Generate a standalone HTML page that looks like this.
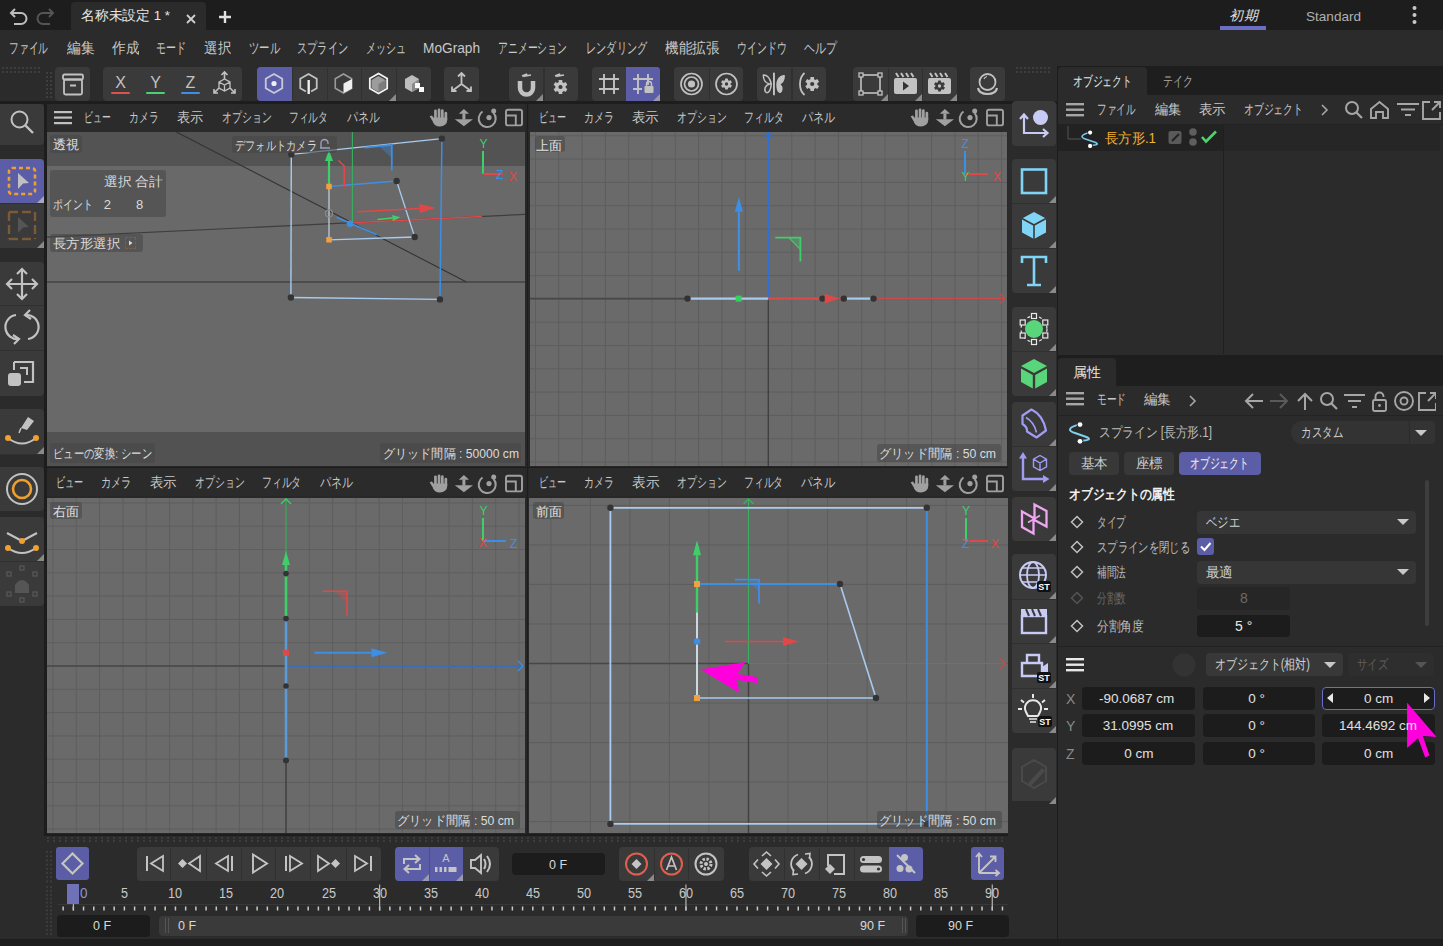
<!DOCTYPE html><html><head><meta charset="utf-8"><style>
html,body{margin:0;padding:0;width:1443px;height:946px;overflow:hidden;background:#1d1d1d;font-family:"Liberation Sans",sans-serif;}
div,span,svg{position:absolute;}
span{white-space:nowrap;line-height:1;}
</style></head><body>
<div style="left:0px;top:0px;width:1443px;height:30px;background:#1d1d1d;border-radius:0px;"></div><div style="left:71px;top:2px;width:135px;height:28px;background:#2b2b2b;border-radius:0px;border-radius:4px 4px 0 0;"></div><div style="left:0px;top:30px;width:1443px;height:72px;background:#2b2b2b;border-radius:0px;"></div><div style="left:1220px;top:26px;width:46px;height:4px;background:#6a6fc4;border-radius:0px;"></div><div style="left:55px;top:67px;width:35px;height:34px;background:#3a3a3a;border-radius:4px;"></div><div style="left:103px;top:67px;width:139px;height:34px;background:#3a3a3a;border-radius:4px;"></div><div style="left:257px;top:67px;width:174px;height:34px;background:#3a3a3a;border-radius:4px;"></div><div style="left:291.8px;top:68px;width:1px;height:32px;background:#303030;border-radius:0px;"></div><div style="left:326.6px;top:68px;width:1px;height:32px;background:#303030;border-radius:0px;"></div><div style="left:361.4px;top:68px;width:1px;height:32px;background:#303030;border-radius:0px;"></div><div style="left:396.2px;top:68px;width:1px;height:32px;background:#303030;border-radius:0px;"></div><div style="left:257.0px;top:67px;width:34.8px;height:34px;background:#5b5ea6;border-radius:0px;border-radius:4px 0 0 4px;"></div><div style="left:444px;top:67px;width:35px;height:34px;background:#3a3a3a;border-radius:4px;"></div><div style="left:509px;top:67px;width:69px;height:34px;background:#3a3a3a;border-radius:4px;"></div><div style="left:543.5px;top:68px;width:1px;height:32px;background:#303030;border-radius:0px;"></div><div style="left:592px;top:67px;width:68px;height:34px;background:#3a3a3a;border-radius:4px;"></div><div style="left:626.0px;top:68px;width:1px;height:32px;background:#303030;border-radius:0px;"></div><div style="left:626.0px;top:67px;width:34.0px;height:34px;background:#5b5ea6;border-radius:0px;border-radius:0 4px 4px 0;"></div><div style="left:674px;top:67px;width:69px;height:34px;background:#3a3a3a;border-radius:4px;"></div><div style="left:708.5px;top:68px;width:1px;height:32px;background:#303030;border-radius:0px;"></div><div style="left:757px;top:67px;width:69px;height:34px;background:#3a3a3a;border-radius:4px;"></div><div style="left:791.5px;top:68px;width:1px;height:32px;background:#303030;border-radius:0px;"></div><div style="left:853px;top:67px;width:104px;height:34px;background:#3a3a3a;border-radius:4px;"></div><div style="left:887.6666666666666px;top:68px;width:1px;height:32px;background:#303030;border-radius:0px;"></div><div style="left:922.3333333333334px;top:68px;width:1px;height:32px;background:#303030;border-radius:0px;"></div><div style="left:970px;top:67px;width:35px;height:34px;background:#3a3a3a;border-radius:4px;"></div><div style="left:0px;top:101px;width:1058px;height:3px;background:#1d1d1d;border-radius:0px;"></div><div style="left:0px;top:104px;width:46px;height:735px;background:#2b2b2b;border-radius:0px;"></div><div style="left:44px;top:104px;width:3px;height:735px;background:#1d1d1d;border-radius:0px;"></div><div style="left:0px;top:104px;width:44px;height:41px;background:#3a3a3a;border-radius:0px;border-radius:0 4px 4px 0;"></div><div style="left:0px;top:159px;width:44px;height:89px;background:#3a3a3a;border-radius:0px;border-radius:0 4px 4px 0;"></div><div style="left:0px;top:262px;width:44px;height:134px;background:#3a3a3a;border-radius:0px;border-radius:0 4px 4px 0;"></div><div style="left:0px;top:409px;width:44px;height:45px;background:#3a3a3a;border-radius:0px;border-radius:0 4px 4px 0;"></div><div style="left:0px;top:467px;width:44px;height:44px;background:#3a3a3a;border-radius:0px;border-radius:0 4px 4px 0;"></div><div style="left:0px;top:517px;width:44px;height:89px;background:#3a3a3a;border-radius:0px;border-radius:0 4px 4px 0;"></div><div style="left:0px;top:159px;width:44px;height:44px;background:#5b5ea6;border-radius:0px;border-radius:0 4px 0 0;"></div><div style="left:47px;top:104px;width:961px;height:730px;background:#282828;border-radius:0px;"></div><div style="left:526.8px;top:104px;width:1.6px;height:730px;background:#1d1d1d;border-radius:0px;"></div><div style="left:47px;top:466.8px;width:961px;height:1.5px;background:#1d1d1d;border-radius:0px;"></div><div style="left:47px;top:104px;width:478px;height:28px;background:#2b2b2b;border-radius:0px;"></div><div style="left:529px;top:104px;width:479px;height:28px;background:#2b2b2b;border-radius:0px;"></div><div style="left:47px;top:468px;width:478px;height:28px;background:#2b2b2b;border-radius:0px;"></div><div style="left:529px;top:468px;width:479px;height:28px;background:#2b2b2b;border-radius:0px;"></div><div style="left:47px;top:132px;width:478px;height:334px;background:#696969;border-radius:0px;"></div><div style="left:47px;top:132px;width:478px;height:34px;background:#535353;border-radius:0px;"></div><div style="left:47px;top:432px;width:478px;height:34px;background:#525252;border-radius:0px;"></div><svg style="left:530px;top:132px;" width="477" height="334" viewBox="0 0 477 334"><rect width="477" height="334" fill="#6a6a6a"/><rect x="5.00" y="0" width="1" height="334" fill="#5e5e5e"/><rect x="28.30" y="0" width="1" height="334" fill="#5e5e5e"/><rect x="51.60" y="0" width="1" height="334" fill="#5e5e5e"/><rect x="74.90" y="0" width="1" height="334" fill="#5e5e5e"/><rect x="98.20" y="0" width="1" height="334" fill="#5e5e5e"/><rect x="121.50" y="0" width="1" height="334" fill="#5e5e5e"/><rect x="144.80" y="0" width="1" height="334" fill="#5e5e5e"/><rect x="168.10" y="0" width="1" height="334" fill="#5e5e5e"/><rect x="191.40" y="0" width="1" height="334" fill="#5e5e5e"/><rect x="214.70" y="0" width="1" height="334" fill="#5e5e5e"/><rect x="238.00" y="0" width="1" height="334" fill="#5e5e5e"/><rect x="261.30" y="0" width="1" height="334" fill="#5e5e5e"/><rect x="284.60" y="0" width="1" height="334" fill="#5e5e5e"/><rect x="307.90" y="0" width="1" height="334" fill="#5e5e5e"/><rect x="331.20" y="0" width="1" height="334" fill="#5e5e5e"/><rect x="354.50" y="0" width="1" height="334" fill="#5e5e5e"/><rect x="377.80" y="0" width="1" height="334" fill="#5e5e5e"/><rect x="401.10" y="0" width="1" height="334" fill="#5e5e5e"/><rect x="424.40" y="0" width="1" height="334" fill="#5e5e5e"/><rect x="447.70" y="0" width="1" height="334" fill="#5e5e5e"/><rect x="471.00" y="0" width="1" height="334" fill="#5e5e5e"/><rect x="0" y="3.30" width="477" height="1" fill="#5e5e5e"/><rect x="0" y="26.60" width="477" height="1" fill="#5e5e5e"/><rect x="0" y="49.90" width="477" height="1" fill="#5e5e5e"/><rect x="0" y="73.20" width="477" height="1" fill="#5e5e5e"/><rect x="0" y="96.50" width="477" height="1" fill="#5e5e5e"/><rect x="0" y="119.80" width="477" height="1" fill="#5e5e5e"/><rect x="0" y="143.10" width="477" height="1" fill="#5e5e5e"/><rect x="0" y="166.40" width="477" height="1" fill="#5e5e5e"/><rect x="0" y="189.70" width="477" height="1" fill="#5e5e5e"/><rect x="0" y="213.00" width="477" height="1" fill="#5e5e5e"/><rect x="0" y="236.30" width="477" height="1" fill="#5e5e5e"/><rect x="0" y="259.60" width="477" height="1" fill="#5e5e5e"/><rect x="0" y="282.90" width="477" height="1" fill="#5e5e5e"/><rect x="0" y="306.20" width="477" height="1" fill="#5e5e5e"/><rect x="0" y="329.50" width="477" height="1" fill="#5e5e5e"/></svg><svg style="left:47px;top:498px;" width="478" height="335" viewBox="0 0 478 335"><rect width="478" height="335" fill="#6a6a6a"/><rect x="5.50" y="0" width="1" height="335" fill="#5e5e5e"/><rect x="28.80" y="0" width="1" height="335" fill="#5e5e5e"/><rect x="52.10" y="0" width="1" height="335" fill="#5e5e5e"/><rect x="75.40" y="0" width="1" height="335" fill="#5e5e5e"/><rect x="98.70" y="0" width="1" height="335" fill="#5e5e5e"/><rect x="122.00" y="0" width="1" height="335" fill="#5e5e5e"/><rect x="145.30" y="0" width="1" height="335" fill="#5e5e5e"/><rect x="168.60" y="0" width="1" height="335" fill="#5e5e5e"/><rect x="191.90" y="0" width="1" height="335" fill="#5e5e5e"/><rect x="215.20" y="0" width="1" height="335" fill="#5e5e5e"/><rect x="238.50" y="0" width="1" height="335" fill="#5e5e5e"/><rect x="261.80" y="0" width="1" height="335" fill="#5e5e5e"/><rect x="285.10" y="0" width="1" height="335" fill="#5e5e5e"/><rect x="308.40" y="0" width="1" height="335" fill="#5e5e5e"/><rect x="331.70" y="0" width="1" height="335" fill="#5e5e5e"/><rect x="355.00" y="0" width="1" height="335" fill="#5e5e5e"/><rect x="378.30" y="0" width="1" height="335" fill="#5e5e5e"/><rect x="401.60" y="0" width="1" height="335" fill="#5e5e5e"/><rect x="424.90" y="0" width="1" height="335" fill="#5e5e5e"/><rect x="448.20" y="0" width="1" height="335" fill="#5e5e5e"/><rect x="471.50" y="0" width="1" height="335" fill="#5e5e5e"/><rect x="0" y="4.40" width="478" height="1" fill="#5e5e5e"/><rect x="0" y="27.70" width="478" height="1" fill="#5e5e5e"/><rect x="0" y="51.00" width="478" height="1" fill="#5e5e5e"/><rect x="0" y="74.30" width="478" height="1" fill="#5e5e5e"/><rect x="0" y="97.60" width="478" height="1" fill="#5e5e5e"/><rect x="0" y="120.90" width="478" height="1" fill="#5e5e5e"/><rect x="0" y="144.20" width="478" height="1" fill="#5e5e5e"/><rect x="0" y="167.50" width="478" height="1" fill="#5e5e5e"/><rect x="0" y="190.80" width="478" height="1" fill="#5e5e5e"/><rect x="0" y="214.10" width="478" height="1" fill="#5e5e5e"/><rect x="0" y="237.40" width="478" height="1" fill="#5e5e5e"/><rect x="0" y="260.70" width="478" height="1" fill="#5e5e5e"/><rect x="0" y="284.00" width="478" height="1" fill="#5e5e5e"/><rect x="0" y="307.30" width="478" height="1" fill="#5e5e5e"/><rect x="0" y="330.60" width="478" height="1" fill="#5e5e5e"/></svg><svg style="left:529px;top:498px;" width="479" height="335" viewBox="0 0 479 335"><rect width="479" height="335" fill="#6a6a6a"/><rect x="21.35" y="0" width="1" height="335" fill="#5e5e5e"/><rect x="60.88" y="0" width="1" height="335" fill="#5e5e5e"/><rect x="100.41" y="0" width="1" height="335" fill="#5e5e5e"/><rect x="139.94" y="0" width="1" height="335" fill="#5e5e5e"/><rect x="179.47" y="0" width="1" height="335" fill="#5e5e5e"/><rect x="219.00" y="0" width="1" height="335" fill="#5e5e5e"/><rect x="258.53" y="0" width="1" height="335" fill="#5e5e5e"/><rect x="298.06" y="0" width="1" height="335" fill="#5e5e5e"/><rect x="337.59" y="0" width="1" height="335" fill="#5e5e5e"/><rect x="377.12" y="0" width="1" height="335" fill="#5e5e5e"/><rect x="416.65" y="0" width="1" height="335" fill="#5e5e5e"/><rect x="456.18" y="0" width="1" height="335" fill="#5e5e5e"/><rect x="0" y="6.88" width="479" height="1" fill="#5e5e5e"/><rect x="0" y="46.41" width="479" height="1" fill="#5e5e5e"/><rect x="0" y="85.94" width="479" height="1" fill="#5e5e5e"/><rect x="0" y="125.47" width="479" height="1" fill="#5e5e5e"/><rect x="0" y="165.00" width="479" height="1" fill="#5e5e5e"/><rect x="0" y="204.53" width="479" height="1" fill="#5e5e5e"/><rect x="0" y="244.06" width="479" height="1" fill="#5e5e5e"/><rect x="0" y="283.59" width="479" height="1" fill="#5e5e5e"/><rect x="0" y="323.12" width="479" height="1" fill="#5e5e5e"/></svg><div style="left:1008px;top:104px;width:50px;height:735px;background:#2b2b2b;border-radius:0px;"></div><div style="left:1012px;top:101px;width:44px;height:45px;background:#3a3a3a;border-radius:4px;"></div><div style="left:1012px;top:159px;width:44px;height:134px;background:#3a3a3a;border-radius:4px;"></div><div style="left:1012px;top:307px;width:44px;height:89px;background:#3a3a3a;border-radius:4px;"></div><div style="left:1012px;top:402px;width:44px;height:89px;background:#3a3a3a;border-radius:4px;"></div><div style="left:1012px;top:497px;width:44px;height:44px;background:#3a3a3a;border-radius:4px;"></div><div style="left:1012px;top:554px;width:44px;height:179px;background:#3a3a3a;border-radius:4px;"></div><div style="left:1012px;top:748px;width:44px;height:56px;background:#3a3a3a;border-radius:4px;"></div><div style="left:1057px;top:66px;width:386px;height:873px;background:#1d1d1d;border-radius:0px;"></div><div style="left:1058px;top:67px;width:385px;height:28px;background:#1e1e1e;border-radius:0px;"></div><div style="left:1058px;top:67px;width:89px;height:28px;background:#2b2b2b;border-radius:0px;border-radius:4px 4px 0 0;"></div><div style="left:1058px;top:95px;width:385px;height:260px;background:#2b2b2b;border-radius:0px;"></div><div style="left:1058px;top:124px;width:385px;height:1px;background:#232323;border-radius:0px;"></div><div style="left:1058px;top:125px;width:166px;height:26px;background:#222222;border-radius:0px;"></div><div style="left:1224px;top:125px;width:216px;height:26px;background:#262626;border-radius:0px;"></div><div style="left:1223px;top:125px;width:1px;height:229px;background:#1f1f1f;border-radius:0px;"></div><div style="left:1058px;top:358px;width:385px;height:28px;background:#1e1e1e;border-radius:0px;"></div><div style="left:1058px;top:358px;width:58px;height:28px;background:#2b2b2b;border-radius:0px;border-radius:4px 4px 0 0;"></div><div style="left:1058px;top:386px;width:385px;height:553px;background:#2b2b2b;border-radius:0px;"></div><div style="left:0px;top:836px;width:1008px;height:103px;background:#2b2b2b;border-radius:0px;"></div><div style="left:1008px;top:801px;width:49px;height:138px;background:#2b2b2b;border-radius:0px;"></div><svg style="left:47px;top:837px;" width="961" height="6" viewBox="0 0 961 6"><rect x="0" y="0" width="2" height="2" fill="#3c3c3c"/><rect x="0" y="3" width="2" height="2" fill="#3c3c3c"/><rect x="6" y="0" width="2" height="2" fill="#3c3c3c"/><rect x="6" y="3" width="2" height="2" fill="#3c3c3c"/><rect x="12" y="0" width="2" height="2" fill="#3c3c3c"/><rect x="12" y="3" width="2" height="2" fill="#3c3c3c"/><rect x="18" y="0" width="2" height="2" fill="#3c3c3c"/><rect x="18" y="3" width="2" height="2" fill="#3c3c3c"/><rect x="24" y="0" width="2" height="2" fill="#3c3c3c"/><rect x="24" y="3" width="2" height="2" fill="#3c3c3c"/><rect x="30" y="0" width="2" height="2" fill="#3c3c3c"/><rect x="30" y="3" width="2" height="2" fill="#3c3c3c"/><rect x="36" y="0" width="2" height="2" fill="#3c3c3c"/><rect x="36" y="3" width="2" height="2" fill="#3c3c3c"/><rect x="42" y="0" width="2" height="2" fill="#3c3c3c"/><rect x="42" y="3" width="2" height="2" fill="#3c3c3c"/><rect x="48" y="0" width="2" height="2" fill="#3c3c3c"/><rect x="48" y="3" width="2" height="2" fill="#3c3c3c"/><rect x="54" y="0" width="2" height="2" fill="#3c3c3c"/><rect x="54" y="3" width="2" height="2" fill="#3c3c3c"/><rect x="60" y="0" width="2" height="2" fill="#3c3c3c"/><rect x="60" y="3" width="2" height="2" fill="#3c3c3c"/><rect x="66" y="0" width="2" height="2" fill="#3c3c3c"/><rect x="66" y="3" width="2" height="2" fill="#3c3c3c"/><rect x="72" y="0" width="2" height="2" fill="#3c3c3c"/><rect x="72" y="3" width="2" height="2" fill="#3c3c3c"/><rect x="78" y="0" width="2" height="2" fill="#3c3c3c"/><rect x="78" y="3" width="2" height="2" fill="#3c3c3c"/><rect x="84" y="0" width="2" height="2" fill="#3c3c3c"/><rect x="84" y="3" width="2" height="2" fill="#3c3c3c"/><rect x="90" y="0" width="2" height="2" fill="#3c3c3c"/><rect x="90" y="3" width="2" height="2" fill="#3c3c3c"/><rect x="96" y="0" width="2" height="2" fill="#3c3c3c"/><rect x="96" y="3" width="2" height="2" fill="#3c3c3c"/><rect x="102" y="0" width="2" height="2" fill="#3c3c3c"/><rect x="102" y="3" width="2" height="2" fill="#3c3c3c"/><rect x="108" y="0" width="2" height="2" fill="#3c3c3c"/><rect x="108" y="3" width="2" height="2" fill="#3c3c3c"/><rect x="114" y="0" width="2" height="2" fill="#3c3c3c"/><rect x="114" y="3" width="2" height="2" fill="#3c3c3c"/><rect x="120" y="0" width="2" height="2" fill="#3c3c3c"/><rect x="120" y="3" width="2" height="2" fill="#3c3c3c"/><rect x="126" y="0" width="2" height="2" fill="#3c3c3c"/><rect x="126" y="3" width="2" height="2" fill="#3c3c3c"/><rect x="132" y="0" width="2" height="2" fill="#3c3c3c"/><rect x="132" y="3" width="2" height="2" fill="#3c3c3c"/><rect x="138" y="0" width="2" height="2" fill="#3c3c3c"/><rect x="138" y="3" width="2" height="2" fill="#3c3c3c"/><rect x="144" y="0" width="2" height="2" fill="#3c3c3c"/><rect x="144" y="3" width="2" height="2" fill="#3c3c3c"/><rect x="150" y="0" width="2" height="2" fill="#3c3c3c"/><rect x="150" y="3" width="2" height="2" fill="#3c3c3c"/><rect x="156" y="0" width="2" height="2" fill="#3c3c3c"/><rect x="156" y="3" width="2" height="2" fill="#3c3c3c"/><rect x="162" y="0" width="2" height="2" fill="#3c3c3c"/><rect x="162" y="3" width="2" height="2" fill="#3c3c3c"/><rect x="168" y="0" width="2" height="2" fill="#3c3c3c"/><rect x="168" y="3" width="2" height="2" fill="#3c3c3c"/><rect x="174" y="0" width="2" height="2" fill="#3c3c3c"/><rect x="174" y="3" width="2" height="2" fill="#3c3c3c"/><rect x="180" y="0" width="2" height="2" fill="#3c3c3c"/><rect x="180" y="3" width="2" height="2" fill="#3c3c3c"/><rect x="186" y="0" width="2" height="2" fill="#3c3c3c"/><rect x="186" y="3" width="2" height="2" fill="#3c3c3c"/><rect x="192" y="0" width="2" height="2" fill="#3c3c3c"/><rect x="192" y="3" width="2" height="2" fill="#3c3c3c"/><rect x="198" y="0" width="2" height="2" fill="#3c3c3c"/><rect x="198" y="3" width="2" height="2" fill="#3c3c3c"/><rect x="204" y="0" width="2" height="2" fill="#3c3c3c"/><rect x="204" y="3" width="2" height="2" fill="#3c3c3c"/><rect x="210" y="0" width="2" height="2" fill="#3c3c3c"/><rect x="210" y="3" width="2" height="2" fill="#3c3c3c"/><rect x="216" y="0" width="2" height="2" fill="#3c3c3c"/><rect x="216" y="3" width="2" height="2" fill="#3c3c3c"/><rect x="222" y="0" width="2" height="2" fill="#3c3c3c"/><rect x="222" y="3" width="2" height="2" fill="#3c3c3c"/><rect x="228" y="0" width="2" height="2" fill="#3c3c3c"/><rect x="228" y="3" width="2" height="2" fill="#3c3c3c"/><rect x="234" y="0" width="2" height="2" fill="#3c3c3c"/><rect x="234" y="3" width="2" height="2" fill="#3c3c3c"/><rect x="240" y="0" width="2" height="2" fill="#3c3c3c"/><rect x="240" y="3" width="2" height="2" fill="#3c3c3c"/><rect x="246" y="0" width="2" height="2" fill="#3c3c3c"/><rect x="246" y="3" width="2" height="2" fill="#3c3c3c"/><rect x="252" y="0" width="2" height="2" fill="#3c3c3c"/><rect x="252" y="3" width="2" height="2" fill="#3c3c3c"/><rect x="258" y="0" width="2" height="2" fill="#3c3c3c"/><rect x="258" y="3" width="2" height="2" fill="#3c3c3c"/><rect x="264" y="0" width="2" height="2" fill="#3c3c3c"/><rect x="264" y="3" width="2" height="2" fill="#3c3c3c"/><rect x="270" y="0" width="2" height="2" fill="#3c3c3c"/><rect x="270" y="3" width="2" height="2" fill="#3c3c3c"/><rect x="276" y="0" width="2" height="2" fill="#3c3c3c"/><rect x="276" y="3" width="2" height="2" fill="#3c3c3c"/><rect x="282" y="0" width="2" height="2" fill="#3c3c3c"/><rect x="282" y="3" width="2" height="2" fill="#3c3c3c"/><rect x="288" y="0" width="2" height="2" fill="#3c3c3c"/><rect x="288" y="3" width="2" height="2" fill="#3c3c3c"/><rect x="294" y="0" width="2" height="2" fill="#3c3c3c"/><rect x="294" y="3" width="2" height="2" fill="#3c3c3c"/><rect x="300" y="0" width="2" height="2" fill="#3c3c3c"/><rect x="300" y="3" width="2" height="2" fill="#3c3c3c"/><rect x="306" y="0" width="2" height="2" fill="#3c3c3c"/><rect x="306" y="3" width="2" height="2" fill="#3c3c3c"/><rect x="312" y="0" width="2" height="2" fill="#3c3c3c"/><rect x="312" y="3" width="2" height="2" fill="#3c3c3c"/><rect x="318" y="0" width="2" height="2" fill="#3c3c3c"/><rect x="318" y="3" width="2" height="2" fill="#3c3c3c"/><rect x="324" y="0" width="2" height="2" fill="#3c3c3c"/><rect x="324" y="3" width="2" height="2" fill="#3c3c3c"/><rect x="330" y="0" width="2" height="2" fill="#3c3c3c"/><rect x="330" y="3" width="2" height="2" fill="#3c3c3c"/><rect x="336" y="0" width="2" height="2" fill="#3c3c3c"/><rect x="336" y="3" width="2" height="2" fill="#3c3c3c"/><rect x="342" y="0" width="2" height="2" fill="#3c3c3c"/><rect x="342" y="3" width="2" height="2" fill="#3c3c3c"/><rect x="348" y="0" width="2" height="2" fill="#3c3c3c"/><rect x="348" y="3" width="2" height="2" fill="#3c3c3c"/><rect x="354" y="0" width="2" height="2" fill="#3c3c3c"/><rect x="354" y="3" width="2" height="2" fill="#3c3c3c"/><rect x="360" y="0" width="2" height="2" fill="#3c3c3c"/><rect x="360" y="3" width="2" height="2" fill="#3c3c3c"/><rect x="366" y="0" width="2" height="2" fill="#3c3c3c"/><rect x="366" y="3" width="2" height="2" fill="#3c3c3c"/><rect x="372" y="0" width="2" height="2" fill="#3c3c3c"/><rect x="372" y="3" width="2" height="2" fill="#3c3c3c"/><rect x="378" y="0" width="2" height="2" fill="#3c3c3c"/><rect x="378" y="3" width="2" height="2" fill="#3c3c3c"/><rect x="384" y="0" width="2" height="2" fill="#3c3c3c"/><rect x="384" y="3" width="2" height="2" fill="#3c3c3c"/><rect x="390" y="0" width="2" height="2" fill="#3c3c3c"/><rect x="390" y="3" width="2" height="2" fill="#3c3c3c"/><rect x="396" y="0" width="2" height="2" fill="#3c3c3c"/><rect x="396" y="3" width="2" height="2" fill="#3c3c3c"/><rect x="402" y="0" width="2" height="2" fill="#3c3c3c"/><rect x="402" y="3" width="2" height="2" fill="#3c3c3c"/><rect x="408" y="0" width="2" height="2" fill="#3c3c3c"/><rect x="408" y="3" width="2" height="2" fill="#3c3c3c"/><rect x="414" y="0" width="2" height="2" fill="#3c3c3c"/><rect x="414" y="3" width="2" height="2" fill="#3c3c3c"/><rect x="420" y="0" width="2" height="2" fill="#3c3c3c"/><rect x="420" y="3" width="2" height="2" fill="#3c3c3c"/><rect x="426" y="0" width="2" height="2" fill="#3c3c3c"/><rect x="426" y="3" width="2" height="2" fill="#3c3c3c"/><rect x="432" y="0" width="2" height="2" fill="#3c3c3c"/><rect x="432" y="3" width="2" height="2" fill="#3c3c3c"/><rect x="438" y="0" width="2" height="2" fill="#3c3c3c"/><rect x="438" y="3" width="2" height="2" fill="#3c3c3c"/><rect x="444" y="0" width="2" height="2" fill="#3c3c3c"/><rect x="444" y="3" width="2" height="2" fill="#3c3c3c"/><rect x="450" y="0" width="2" height="2" fill="#3c3c3c"/><rect x="450" y="3" width="2" height="2" fill="#3c3c3c"/><rect x="456" y="0" width="2" height="2" fill="#3c3c3c"/><rect x="456" y="3" width="2" height="2" fill="#3c3c3c"/><rect x="462" y="0" width="2" height="2" fill="#3c3c3c"/><rect x="462" y="3" width="2" height="2" fill="#3c3c3c"/><rect x="468" y="0" width="2" height="2" fill="#3c3c3c"/><rect x="468" y="3" width="2" height="2" fill="#3c3c3c"/><rect x="474" y="0" width="2" height="2" fill="#3c3c3c"/><rect x="474" y="3" width="2" height="2" fill="#3c3c3c"/><rect x="480" y="0" width="2" height="2" fill="#3c3c3c"/><rect x="480" y="3" width="2" height="2" fill="#3c3c3c"/><rect x="486" y="0" width="2" height="2" fill="#3c3c3c"/><rect x="486" y="3" width="2" height="2" fill="#3c3c3c"/><rect x="492" y="0" width="2" height="2" fill="#3c3c3c"/><rect x="492" y="3" width="2" height="2" fill="#3c3c3c"/><rect x="498" y="0" width="2" height="2" fill="#3c3c3c"/><rect x="498" y="3" width="2" height="2" fill="#3c3c3c"/><rect x="504" y="0" width="2" height="2" fill="#3c3c3c"/><rect x="504" y="3" width="2" height="2" fill="#3c3c3c"/><rect x="510" y="0" width="2" height="2" fill="#3c3c3c"/><rect x="510" y="3" width="2" height="2" fill="#3c3c3c"/><rect x="516" y="0" width="2" height="2" fill="#3c3c3c"/><rect x="516" y="3" width="2" height="2" fill="#3c3c3c"/><rect x="522" y="0" width="2" height="2" fill="#3c3c3c"/><rect x="522" y="3" width="2" height="2" fill="#3c3c3c"/><rect x="528" y="0" width="2" height="2" fill="#3c3c3c"/><rect x="528" y="3" width="2" height="2" fill="#3c3c3c"/><rect x="534" y="0" width="2" height="2" fill="#3c3c3c"/><rect x="534" y="3" width="2" height="2" fill="#3c3c3c"/><rect x="540" y="0" width="2" height="2" fill="#3c3c3c"/><rect x="540" y="3" width="2" height="2" fill="#3c3c3c"/><rect x="546" y="0" width="2" height="2" fill="#3c3c3c"/><rect x="546" y="3" width="2" height="2" fill="#3c3c3c"/><rect x="552" y="0" width="2" height="2" fill="#3c3c3c"/><rect x="552" y="3" width="2" height="2" fill="#3c3c3c"/><rect x="558" y="0" width="2" height="2" fill="#3c3c3c"/><rect x="558" y="3" width="2" height="2" fill="#3c3c3c"/><rect x="564" y="0" width="2" height="2" fill="#3c3c3c"/><rect x="564" y="3" width="2" height="2" fill="#3c3c3c"/><rect x="570" y="0" width="2" height="2" fill="#3c3c3c"/><rect x="570" y="3" width="2" height="2" fill="#3c3c3c"/><rect x="576" y="0" width="2" height="2" fill="#3c3c3c"/><rect x="576" y="3" width="2" height="2" fill="#3c3c3c"/><rect x="582" y="0" width="2" height="2" fill="#3c3c3c"/><rect x="582" y="3" width="2" height="2" fill="#3c3c3c"/><rect x="588" y="0" width="2" height="2" fill="#3c3c3c"/><rect x="588" y="3" width="2" height="2" fill="#3c3c3c"/><rect x="594" y="0" width="2" height="2" fill="#3c3c3c"/><rect x="594" y="3" width="2" height="2" fill="#3c3c3c"/><rect x="600" y="0" width="2" height="2" fill="#3c3c3c"/><rect x="600" y="3" width="2" height="2" fill="#3c3c3c"/><rect x="606" y="0" width="2" height="2" fill="#3c3c3c"/><rect x="606" y="3" width="2" height="2" fill="#3c3c3c"/><rect x="612" y="0" width="2" height="2" fill="#3c3c3c"/><rect x="612" y="3" width="2" height="2" fill="#3c3c3c"/><rect x="618" y="0" width="2" height="2" fill="#3c3c3c"/><rect x="618" y="3" width="2" height="2" fill="#3c3c3c"/><rect x="624" y="0" width="2" height="2" fill="#3c3c3c"/><rect x="624" y="3" width="2" height="2" fill="#3c3c3c"/><rect x="630" y="0" width="2" height="2" fill="#3c3c3c"/><rect x="630" y="3" width="2" height="2" fill="#3c3c3c"/><rect x="636" y="0" width="2" height="2" fill="#3c3c3c"/><rect x="636" y="3" width="2" height="2" fill="#3c3c3c"/><rect x="642" y="0" width="2" height="2" fill="#3c3c3c"/><rect x="642" y="3" width="2" height="2" fill="#3c3c3c"/><rect x="648" y="0" width="2" height="2" fill="#3c3c3c"/><rect x="648" y="3" width="2" height="2" fill="#3c3c3c"/><rect x="654" y="0" width="2" height="2" fill="#3c3c3c"/><rect x="654" y="3" width="2" height="2" fill="#3c3c3c"/><rect x="660" y="0" width="2" height="2" fill="#3c3c3c"/><rect x="660" y="3" width="2" height="2" fill="#3c3c3c"/><rect x="666" y="0" width="2" height="2" fill="#3c3c3c"/><rect x="666" y="3" width="2" height="2" fill="#3c3c3c"/><rect x="672" y="0" width="2" height="2" fill="#3c3c3c"/><rect x="672" y="3" width="2" height="2" fill="#3c3c3c"/><rect x="678" y="0" width="2" height="2" fill="#3c3c3c"/><rect x="678" y="3" width="2" height="2" fill="#3c3c3c"/><rect x="684" y="0" width="2" height="2" fill="#3c3c3c"/><rect x="684" y="3" width="2" height="2" fill="#3c3c3c"/><rect x="690" y="0" width="2" height="2" fill="#3c3c3c"/><rect x="690" y="3" width="2" height="2" fill="#3c3c3c"/><rect x="696" y="0" width="2" height="2" fill="#3c3c3c"/><rect x="696" y="3" width="2" height="2" fill="#3c3c3c"/><rect x="702" y="0" width="2" height="2" fill="#3c3c3c"/><rect x="702" y="3" width="2" height="2" fill="#3c3c3c"/><rect x="708" y="0" width="2" height="2" fill="#3c3c3c"/><rect x="708" y="3" width="2" height="2" fill="#3c3c3c"/><rect x="714" y="0" width="2" height="2" fill="#3c3c3c"/><rect x="714" y="3" width="2" height="2" fill="#3c3c3c"/><rect x="720" y="0" width="2" height="2" fill="#3c3c3c"/><rect x="720" y="3" width="2" height="2" fill="#3c3c3c"/><rect x="726" y="0" width="2" height="2" fill="#3c3c3c"/><rect x="726" y="3" width="2" height="2" fill="#3c3c3c"/><rect x="732" y="0" width="2" height="2" fill="#3c3c3c"/><rect x="732" y="3" width="2" height="2" fill="#3c3c3c"/><rect x="738" y="0" width="2" height="2" fill="#3c3c3c"/><rect x="738" y="3" width="2" height="2" fill="#3c3c3c"/><rect x="744" y="0" width="2" height="2" fill="#3c3c3c"/><rect x="744" y="3" width="2" height="2" fill="#3c3c3c"/><rect x="750" y="0" width="2" height="2" fill="#3c3c3c"/><rect x="750" y="3" width="2" height="2" fill="#3c3c3c"/><rect x="756" y="0" width="2" height="2" fill="#3c3c3c"/><rect x="756" y="3" width="2" height="2" fill="#3c3c3c"/><rect x="762" y="0" width="2" height="2" fill="#3c3c3c"/><rect x="762" y="3" width="2" height="2" fill="#3c3c3c"/><rect x="768" y="0" width="2" height="2" fill="#3c3c3c"/><rect x="768" y="3" width="2" height="2" fill="#3c3c3c"/><rect x="774" y="0" width="2" height="2" fill="#3c3c3c"/><rect x="774" y="3" width="2" height="2" fill="#3c3c3c"/><rect x="780" y="0" width="2" height="2" fill="#3c3c3c"/><rect x="780" y="3" width="2" height="2" fill="#3c3c3c"/><rect x="786" y="0" width="2" height="2" fill="#3c3c3c"/><rect x="786" y="3" width="2" height="2" fill="#3c3c3c"/><rect x="792" y="0" width="2" height="2" fill="#3c3c3c"/><rect x="792" y="3" width="2" height="2" fill="#3c3c3c"/><rect x="798" y="0" width="2" height="2" fill="#3c3c3c"/><rect x="798" y="3" width="2" height="2" fill="#3c3c3c"/><rect x="804" y="0" width="2" height="2" fill="#3c3c3c"/><rect x="804" y="3" width="2" height="2" fill="#3c3c3c"/><rect x="810" y="0" width="2" height="2" fill="#3c3c3c"/><rect x="810" y="3" width="2" height="2" fill="#3c3c3c"/><rect x="816" y="0" width="2" height="2" fill="#3c3c3c"/><rect x="816" y="3" width="2" height="2" fill="#3c3c3c"/><rect x="822" y="0" width="2" height="2" fill="#3c3c3c"/><rect x="822" y="3" width="2" height="2" fill="#3c3c3c"/><rect x="828" y="0" width="2" height="2" fill="#3c3c3c"/><rect x="828" y="3" width="2" height="2" fill="#3c3c3c"/><rect x="834" y="0" width="2" height="2" fill="#3c3c3c"/><rect x="834" y="3" width="2" height="2" fill="#3c3c3c"/><rect x="840" y="0" width="2" height="2" fill="#3c3c3c"/><rect x="840" y="3" width="2" height="2" fill="#3c3c3c"/><rect x="846" y="0" width="2" height="2" fill="#3c3c3c"/><rect x="846" y="3" width="2" height="2" fill="#3c3c3c"/><rect x="852" y="0" width="2" height="2" fill="#3c3c3c"/><rect x="852" y="3" width="2" height="2" fill="#3c3c3c"/><rect x="858" y="0" width="2" height="2" fill="#3c3c3c"/><rect x="858" y="3" width="2" height="2" fill="#3c3c3c"/><rect x="864" y="0" width="2" height="2" fill="#3c3c3c"/><rect x="864" y="3" width="2" height="2" fill="#3c3c3c"/><rect x="870" y="0" width="2" height="2" fill="#3c3c3c"/><rect x="870" y="3" width="2" height="2" fill="#3c3c3c"/><rect x="876" y="0" width="2" height="2" fill="#3c3c3c"/><rect x="876" y="3" width="2" height="2" fill="#3c3c3c"/><rect x="882" y="0" width="2" height="2" fill="#3c3c3c"/><rect x="882" y="3" width="2" height="2" fill="#3c3c3c"/><rect x="888" y="0" width="2" height="2" fill="#3c3c3c"/><rect x="888" y="3" width="2" height="2" fill="#3c3c3c"/><rect x="894" y="0" width="2" height="2" fill="#3c3c3c"/><rect x="894" y="3" width="2" height="2" fill="#3c3c3c"/><rect x="900" y="0" width="2" height="2" fill="#3c3c3c"/><rect x="900" y="3" width="2" height="2" fill="#3c3c3c"/><rect x="906" y="0" width="2" height="2" fill="#3c3c3c"/><rect x="906" y="3" width="2" height="2" fill="#3c3c3c"/><rect x="912" y="0" width="2" height="2" fill="#3c3c3c"/><rect x="912" y="3" width="2" height="2" fill="#3c3c3c"/><rect x="918" y="0" width="2" height="2" fill="#3c3c3c"/><rect x="918" y="3" width="2" height="2" fill="#3c3c3c"/><rect x="924" y="0" width="2" height="2" fill="#3c3c3c"/><rect x="924" y="3" width="2" height="2" fill="#3c3c3c"/><rect x="930" y="0" width="2" height="2" fill="#3c3c3c"/><rect x="930" y="3" width="2" height="2" fill="#3c3c3c"/><rect x="936" y="0" width="2" height="2" fill="#3c3c3c"/><rect x="936" y="3" width="2" height="2" fill="#3c3c3c"/><rect x="942" y="0" width="2" height="2" fill="#3c3c3c"/><rect x="942" y="3" width="2" height="2" fill="#3c3c3c"/><rect x="948" y="0" width="2" height="2" fill="#3c3c3c"/><rect x="948" y="3" width="2" height="2" fill="#3c3c3c"/><rect x="954" y="0" width="2" height="2" fill="#3c3c3c"/><rect x="954" y="3" width="2" height="2" fill="#3c3c3c"/></svg><svg style="left:46px;top:851px;" width="6" height="34" viewBox="0 0 6 34"><rect x="0" y="0.0" width="2" height="2" fill="#3c3c3c"/><rect x="4" y="0.0" width="2" height="2" fill="#3c3c3c"/><rect x="0" y="4.2" width="2" height="2" fill="#3c3c3c"/><rect x="4" y="4.2" width="2" height="2" fill="#3c3c3c"/><rect x="0" y="8.4" width="2" height="2" fill="#3c3c3c"/><rect x="4" y="8.4" width="2" height="2" fill="#3c3c3c"/><rect x="0" y="12.6" width="2" height="2" fill="#3c3c3c"/><rect x="4" y="12.6" width="2" height="2" fill="#3c3c3c"/><rect x="0" y="16.8" width="2" height="2" fill="#3c3c3c"/><rect x="4" y="16.8" width="2" height="2" fill="#3c3c3c"/><rect x="0" y="21.0" width="2" height="2" fill="#3c3c3c"/><rect x="4" y="21.0" width="2" height="2" fill="#3c3c3c"/><rect x="0" y="25.2" width="2" height="2" fill="#3c3c3c"/><rect x="4" y="25.2" width="2" height="2" fill="#3c3c3c"/><rect x="0" y="29.4" width="2" height="2" fill="#3c3c3c"/><rect x="4" y="29.4" width="2" height="2" fill="#3c3c3c"/></svg><svg style="left:46px;top:886px;" width="6" height="52" viewBox="0 0 6 52"><rect x="0" y="0.0" width="2" height="2" fill="#3c3c3c"/><rect x="4" y="0.0" width="2" height="2" fill="#3c3c3c"/><rect x="0" y="3.9" width="2" height="2" fill="#3c3c3c"/><rect x="4" y="3.9" width="2" height="2" fill="#3c3c3c"/><rect x="0" y="7.8" width="2" height="2" fill="#3c3c3c"/><rect x="4" y="7.8" width="2" height="2" fill="#3c3c3c"/><rect x="0" y="11.7" width="2" height="2" fill="#3c3c3c"/><rect x="4" y="11.7" width="2" height="2" fill="#3c3c3c"/><rect x="0" y="15.6" width="2" height="2" fill="#3c3c3c"/><rect x="4" y="15.6" width="2" height="2" fill="#3c3c3c"/><rect x="0" y="19.5" width="2" height="2" fill="#3c3c3c"/><rect x="4" y="19.5" width="2" height="2" fill="#3c3c3c"/><rect x="0" y="23.4" width="2" height="2" fill="#3c3c3c"/><rect x="4" y="23.4" width="2" height="2" fill="#3c3c3c"/><rect x="0" y="27.3" width="2" height="2" fill="#3c3c3c"/><rect x="4" y="27.3" width="2" height="2" fill="#3c3c3c"/><rect x="0" y="31.2" width="2" height="2" fill="#3c3c3c"/><rect x="4" y="31.2" width="2" height="2" fill="#3c3c3c"/><rect x="0" y="35.1" width="2" height="2" fill="#3c3c3c"/><rect x="4" y="35.1" width="2" height="2" fill="#3c3c3c"/><rect x="0" y="39.0" width="2" height="2" fill="#3c3c3c"/><rect x="4" y="39.0" width="2" height="2" fill="#3c3c3c"/><rect x="0" y="42.9" width="2" height="2" fill="#3c3c3c"/><rect x="4" y="42.9" width="2" height="2" fill="#3c3c3c"/><rect x="0" y="46.8" width="2" height="2" fill="#3c3c3c"/><rect x="4" y="46.8" width="2" height="2" fill="#3c3c3c"/></svg><div style="left:56px;top:847px;width:33px;height:33px;background:#5b5ea6;border-radius:3px;"></div><svg style="left:56px;top:847px;" width="33" height="33" viewBox="0 0 33 33"><path d="M16.5 6.5 L26.5 16.5 L16.5 26.5 L6.5 16.5Z" fill="none" stroke="#c4c4c4" stroke-width="2.2"/></svg><div style="left:137px;top:847px;width:244px;height:34px;background:#3a3a3a;border-radius:4px;"></div><div style="left:170px;top:848px;width:1px;height:32px;background:#303030;border-radius:0px;"></div><div style="left:205.5px;top:848px;width:1px;height:32px;background:#303030;border-radius:0px;"></div><div style="left:240.8px;top:848px;width:1px;height:32px;background:#303030;border-radius:0px;"></div><div style="left:275.4px;top:848px;width:1px;height:32px;background:#303030;border-radius:0px;"></div><div style="left:310.3px;top:848px;width:1px;height:32px;background:#303030;border-radius:0px;"></div><div style="left:345.5px;top:848px;width:1px;height:32px;background:#303030;border-radius:0px;"></div><svg style="left:137.0px;top:847px;" width="35" height="34" viewBox="0 0 35 34"><rect x="9" y="9" width="2" height="15" fill="#c4c4c4"/><path d="M26 9 L14 16.5 L26 24Z" fill="none" stroke="#c4c4c4" stroke-width="1.8"/></svg><svg style="left:171.86px;top:847px;" width="35" height="34" viewBox="0 0 35 34"><path d="M6 16.5 L10.5 12 L15 16.5 L10.5 21Z" fill="#c4c4c4"/><path d="M28 9 L17 16.5 L28 24Z" fill="none" stroke="#c4c4c4" stroke-width="1.8"/></svg><svg style="left:206.72px;top:847px;" width="35" height="34" viewBox="0 0 35 34"><path d="M21 9 L9 16.5 L21 24Z" fill="none" stroke="#c4c4c4" stroke-width="1.8"/><rect x="24" y="9" width="2" height="15" fill="#c4c4c4"/></svg><svg style="left:241.57999999999998px;top:847px;" width="35" height="34" viewBox="0 0 35 34"><path d="M11 7.5 L25 16.5 L11 25.5Z" fill="none" stroke="#c4c4c4" stroke-width="1.9"/></svg><svg style="left:276.44px;top:847px;" width="35" height="34" viewBox="0 0 35 34"><rect x="9" y="9" width="2" height="15" fill="#c4c4c4"/><path d="M14 9 L26 16.5 L14 24Z" fill="none" stroke="#c4c4c4" stroke-width="1.8"/></svg><svg style="left:311.3px;top:847px;" width="35" height="34" viewBox="0 0 35 34"><path d="M7 9 L18 16.5 L7 24Z" fill="none" stroke="#c4c4c4" stroke-width="1.8"/><path d="M20 16.5 L24.5 12 L29 16.5 L24.5 21Z" fill="#c4c4c4"/></svg><svg style="left:346.15999999999997px;top:847px;" width="35" height="34" viewBox="0 0 35 34"><path d="M9 9 L21 16.5 L9 24Z" fill="none" stroke="#c4c4c4" stroke-width="1.8"/><rect x="24" y="9" width="2" height="15" fill="#c4c4c4"/></svg><div style="left:395px;top:847px;width:104px;height:34px;background:#3a3a3a;border-radius:4px;"></div><div style="left:395px;top:847px;width:34px;height:34px;background:#5b5ea6;border-radius:0px;border-radius:4px 0 0 4px;"></div><div style="left:429px;top:847px;width:34px;height:34px;background:#5b5ea6;border-radius:0px;"></div><div style="left:428.5px;top:847px;width:1px;height:34px;background:#4a4d8a;border-radius:0px;"></div><svg style="left:395px;top:847px;" width="34" height="34" viewBox="0 0 34 34"><path d="M9 17 V12 H24 M20 8 L24.5 12 L20 16 M25 17 V22 H10 M14 18 L9.5 22 L14 26" fill="none" stroke="#c4c4c4" stroke-width="2"/></svg><svg style="left:429px;top:847px;" width="34" height="34" viewBox="0 0 34 34"><text x="17" y="15" font-size="11" fill="#c4c4c4" text-anchor="middle" font-family="Liberation Sans">A</text><rect x="6" y="20" width="2.5" height="5" fill="#c4c4c4"/><rect x="10.5" y="20" width="2.5" height="5" fill="#c4c4c4"/><rect x="15" y="20" width="2.5" height="5" fill="#c4c4c4"/><rect x="19.5" y="20" width="8" height="5" fill="#c4c4c4"/></svg><svg style="left:463px;top:847px;" width="36" height="34" viewBox="0 0 36 34"><path d="M8 13 H12 L18 8 V26 L12 21 H8Z" fill="none" stroke="#c4c4c4" stroke-width="1.9"/><path d="M21 12 Q24 17 21 22" fill="none" stroke="#c4c4c4" stroke-width="2"/><path d="M24 9 Q30 17 24 25" fill="none" stroke="#c4c4c4" stroke-width="2"/></svg><svg style="left:422px;top:874px;" width="7" height="7" viewBox="0 0 7 7"><path d="M7 0 L7 7 L0 7Z" fill="#9a9ab0"/></svg><svg style="left:456px;top:874px;" width="7" height="7" viewBox="0 0 7 7"><path d="M7 0 L7 7 L0 7Z" fill="#9a9ab0"/></svg><div style="left:512px;top:853px;width:93px;height:22px;background:#1c1c1c;border-radius:4px;"></div><div style="left:619px;top:847px;width:105px;height:34px;background:#3a3a3a;border-radius:4px;"></div><div style="left:653.6px;top:848px;width:1px;height:32px;background:#303030;border-radius:0px;"></div><div style="left:688px;top:848px;width:1px;height:32px;background:#303030;border-radius:0px;"></div><svg style="left:619px;top:847px;" width="35" height="34" viewBox="0 0 35 34"><circle cx="17.5" cy="17" r="10.5" fill="none" stroke="#e0604e" stroke-width="2"/><path d="M17.5 12 L22.5 17 L17.5 22 L12.5 17Z" fill="#c4c4c4"/></svg><svg style="left:654px;top:847px;" width="35" height="34" viewBox="0 0 35 34"><circle cx="17.5" cy="17" r="10.5" fill="none" stroke="#e0604e" stroke-width="2"/><path d="M12.5 23 L17.5 10 L22.5 23 M14.2 19 H20.8" fill="none" stroke="#c4c4c4" stroke-width="1.7"/></svg><svg style="left:688px;top:847px;" width="36" height="34" viewBox="0 0 36 34"><circle cx="18" cy="17" r="10.5" fill="none" stroke="#c4c4c4" stroke-width="2"/><circle cx="18" cy="17" r="5" fill="none" stroke="#c4c4c4" stroke-width="3" stroke-dasharray="2.4 1.5"/><circle cx="18" cy="17" r="2" fill="#c4c4c4"/></svg><svg style="left:647px;top:874px;" width="7" height="7" viewBox="0 0 7 7"><path d="M7 0 L7 7 L0 7Z" fill="#8a8a8a"/></svg><div style="left:749px;top:847px;width:174px;height:34px;background:#3a3a3a;border-radius:4px;"></div><div style="left:783.9px;top:848px;width:1px;height:32px;background:#303030;border-radius:0px;"></div><div style="left:818.5px;top:848px;width:1px;height:32px;background:#303030;border-radius:0px;"></div><div style="left:853.7px;top:848px;width:1px;height:32px;background:#303030;border-radius:0px;"></div><div style="left:889px;top:847px;width:34px;height:34px;background:#5b5ea6;border-radius:0px;border-radius:0 4px 4px 0;"></div><svg style="left:749px;top:847px;" width="35" height="34" viewBox="0 0 35 34"><path d="M17.5 11 L23.5 17 L17.5 23 L11.5 17Z" fill="#c4c4c4"/><path d="M13 9 L17.5 5 L22 9 M26 12.5 L30 17 L26 21.5 M22 25 L17.5 29 L13 25 M9 21.5 L5 17 L9 12.5" fill="none" stroke="#c4c4c4" stroke-width="1.6"/></svg><svg style="left:784px;top:847px;" width="35" height="34" viewBox="0 0 35 34"><path d="M17.5 11 L23.5 17 L17.5 23 L11.5 17Z" fill="#c4c4c4"/><path d="M10 24 A10 10 0 0 1 14 7.5 M25 10 A10 10 0 0 1 21 26.5" fill="none" stroke="#c4c4c4" stroke-width="1.8"/><path d="M21 7 L26 6.5 L25.5 11.5 M14 27 L9 27.5 L9.5 22.5" fill="none" stroke="#c4c4c4" stroke-width="1.6"/></svg><svg style="left:819px;top:847px;" width="35" height="34" viewBox="0 0 35 34"><path d="M9 19 V8 H25 V27 H15" fill="none" stroke="#c4c4c4" stroke-width="2"/><path d="M11 17 L16 22 L11 27 L6 22Z" fill="#c4c4c4"/></svg><svg style="left:854px;top:847px;" width="35" height="34" viewBox="0 0 35 34"><rect x="6" y="9" width="22" height="7" rx="3.5" fill="#c4c4c4"/><rect x="6" y="18.5" width="22" height="7" rx="3.5" fill="#c4c4c4"/><circle cx="9.5" cy="12.5" r="1.6" fill="#333"/><circle cx="24.5" cy="22" r="1.6" fill="#333"/></svg><svg style="left:889px;top:847px;" width="34" height="34" viewBox="0 0 34 34"><circle cx="15.5" cy="10.5" r="3.5" fill="#c4c4c4"/><circle cx="11" cy="21.5" r="3.5" fill="#c4c4c4"/><circle cx="20" cy="22" r="3.5" fill="#c4c4c4"/><path d="M8 8 L26 26" stroke="#c4c4c4" stroke-width="2"/></svg><div style="left:971px;top:847px;width:33px;height:33px;background:#5b5ea6;border-radius:3px;"></div><svg style="left:971px;top:847px;" width="33" height="33" viewBox="0 0 33 33"><path d="M8 26 V7 M5 10 L8 6.5 L11 10 M8 26 H28 M24.5 23 L28 26 L24.5 29 M8 26 L24.5 9.5 M19 9.5 H24.5 V15" fill="none" stroke="#c4c4c4" stroke-width="1.9"/></svg><div style="left:58px;top:904px;width:950px;height:1px;background:#383838;border-radius:0px;"></div><svg style="left:58px;top:904px;overflow:visible;" width="950" height="8" viewBox="0 0 950 8"><rect x="4.39" y="2.5" width="1.5" height="4" fill="#c8c8c8"/><rect x="14.60" y="2.5" width="1.5" height="4" fill="#c8c8c8"/><rect x="24.81" y="2.5" width="1.5" height="4" fill="#c8c8c8"/><rect x="35.02" y="2.5" width="1.5" height="4" fill="#c8c8c8"/><rect x="45.23" y="2.5" width="1.5" height="4" fill="#c8c8c8"/><rect x="55.44" y="2.5" width="1.5" height="4" fill="#c8c8c8"/><rect x="65.65" y="2.5" width="1.5" height="4" fill="#c8c8c8"/><rect x="75.86" y="2.5" width="1.5" height="4" fill="#c8c8c8"/><rect x="86.07" y="2.5" width="1.5" height="4" fill="#c8c8c8"/><rect x="96.28" y="2.5" width="1.5" height="4" fill="#c8c8c8"/><rect x="106.49" y="2.5" width="1.5" height="4" fill="#c8c8c8"/><rect x="116.70" y="2.5" width="1.5" height="4" fill="#c8c8c8"/><rect x="126.91" y="2.5" width="1.5" height="4" fill="#c8c8c8"/><rect x="137.12" y="2.5" width="1.5" height="4" fill="#c8c8c8"/><rect x="147.33" y="2.5" width="1.5" height="4" fill="#c8c8c8"/><rect x="157.54" y="2.5" width="1.5" height="4" fill="#c8c8c8"/><rect x="167.75" y="2.5" width="1.5" height="4" fill="#c8c8c8"/><rect x="177.96" y="2.5" width="1.5" height="4" fill="#c8c8c8"/><rect x="188.17" y="2.5" width="1.5" height="4" fill="#c8c8c8"/><rect x="198.38" y="2.5" width="1.5" height="4" fill="#c8c8c8"/><rect x="208.59" y="2.5" width="1.5" height="4" fill="#c8c8c8"/><rect x="218.80" y="2.5" width="1.5" height="4" fill="#c8c8c8"/><rect x="229.01" y="2.5" width="1.5" height="4" fill="#c8c8c8"/><rect x="239.22" y="2.5" width="1.5" height="4" fill="#c8c8c8"/><rect x="249.43" y="2.5" width="1.5" height="4" fill="#c8c8c8"/><rect x="259.64" y="2.5" width="1.5" height="4" fill="#c8c8c8"/><rect x="269.85" y="2.5" width="1.5" height="4" fill="#c8c8c8"/><rect x="280.06" y="2.5" width="1.5" height="4" fill="#c8c8c8"/><rect x="290.27" y="2.5" width="1.5" height="4" fill="#c8c8c8"/><rect x="300.48" y="2.5" width="1.5" height="4" fill="#c8c8c8"/><rect x="310.69" y="2.5" width="1.5" height="4" fill="#c8c8c8"/><rect x="320.90" y="2.5" width="1.5" height="4" fill="#c8c8c8"/><rect x="331.11" y="2.5" width="1.5" height="4" fill="#c8c8c8"/><rect x="341.32" y="2.5" width="1.5" height="4" fill="#c8c8c8"/><rect x="351.53" y="2.5" width="1.5" height="4" fill="#c8c8c8"/><rect x="361.74" y="2.5" width="1.5" height="4" fill="#c8c8c8"/><rect x="371.95" y="2.5" width="1.5" height="4" fill="#c8c8c8"/><rect x="382.16" y="2.5" width="1.5" height="4" fill="#c8c8c8"/><rect x="392.37" y="2.5" width="1.5" height="4" fill="#c8c8c8"/><rect x="402.58" y="2.5" width="1.5" height="4" fill="#c8c8c8"/><rect x="412.79" y="2.5" width="1.5" height="4" fill="#c8c8c8"/><rect x="423.00" y="2.5" width="1.5" height="4" fill="#c8c8c8"/><rect x="433.21" y="2.5" width="1.5" height="4" fill="#c8c8c8"/><rect x="443.42" y="2.5" width="1.5" height="4" fill="#c8c8c8"/><rect x="453.63" y="2.5" width="1.5" height="4" fill="#c8c8c8"/><rect x="463.84" y="2.5" width="1.5" height="4" fill="#c8c8c8"/><rect x="474.05" y="2.5" width="1.5" height="4" fill="#c8c8c8"/><rect x="484.26" y="2.5" width="1.5" height="4" fill="#c8c8c8"/><rect x="494.47" y="2.5" width="1.5" height="4" fill="#c8c8c8"/><rect x="504.68" y="2.5" width="1.5" height="4" fill="#c8c8c8"/><rect x="514.89" y="2.5" width="1.5" height="4" fill="#c8c8c8"/><rect x="525.10" y="2.5" width="1.5" height="4" fill="#c8c8c8"/><rect x="535.31" y="2.5" width="1.5" height="4" fill="#c8c8c8"/><rect x="545.52" y="2.5" width="1.5" height="4" fill="#c8c8c8"/><rect x="555.73" y="2.5" width="1.5" height="4" fill="#c8c8c8"/><rect x="565.94" y="2.5" width="1.5" height="4" fill="#c8c8c8"/><rect x="576.15" y="2.5" width="1.5" height="4" fill="#c8c8c8"/><rect x="586.36" y="2.5" width="1.5" height="4" fill="#c8c8c8"/><rect x="596.57" y="2.5" width="1.5" height="4" fill="#c8c8c8"/><rect x="606.78" y="2.5" width="1.5" height="4" fill="#c8c8c8"/><rect x="616.99" y="2.5" width="1.5" height="4" fill="#c8c8c8"/><rect x="627.20" y="2.5" width="1.5" height="4" fill="#c8c8c8"/><rect x="637.41" y="2.5" width="1.5" height="4" fill="#c8c8c8"/><rect x="647.62" y="2.5" width="1.5" height="4" fill="#c8c8c8"/><rect x="657.83" y="2.5" width="1.5" height="4" fill="#c8c8c8"/><rect x="668.04" y="2.5" width="1.5" height="4" fill="#c8c8c8"/><rect x="678.25" y="2.5" width="1.5" height="4" fill="#c8c8c8"/><rect x="688.46" y="2.5" width="1.5" height="4" fill="#c8c8c8"/><rect x="698.67" y="2.5" width="1.5" height="4" fill="#c8c8c8"/><rect x="708.88" y="2.5" width="1.5" height="4" fill="#c8c8c8"/><rect x="719.09" y="2.5" width="1.5" height="4" fill="#c8c8c8"/><rect x="729.30" y="2.5" width="1.5" height="4" fill="#c8c8c8"/><rect x="739.51" y="2.5" width="1.5" height="4" fill="#c8c8c8"/><rect x="749.72" y="2.5" width="1.5" height="4" fill="#c8c8c8"/><rect x="759.93" y="2.5" width="1.5" height="4" fill="#c8c8c8"/><rect x="770.14" y="2.5" width="1.5" height="4" fill="#c8c8c8"/><rect x="780.35" y="2.5" width="1.5" height="4" fill="#c8c8c8"/><rect x="790.56" y="2.5" width="1.5" height="4" fill="#c8c8c8"/><rect x="800.77" y="2.5" width="1.5" height="4" fill="#c8c8c8"/><rect x="810.98" y="2.5" width="1.5" height="4" fill="#c8c8c8"/><rect x="821.19" y="2.5" width="1.5" height="4" fill="#c8c8c8"/><rect x="831.40" y="2.5" width="1.5" height="4" fill="#c8c8c8"/><rect x="841.61" y="2.5" width="1.5" height="4" fill="#c8c8c8"/><rect x="851.82" y="2.5" width="1.5" height="4" fill="#c8c8c8"/><rect x="862.03" y="2.5" width="1.5" height="4" fill="#c8c8c8"/><rect x="872.24" y="2.5" width="1.5" height="4" fill="#c8c8c8"/><rect x="882.45" y="2.5" width="1.5" height="4" fill="#c8c8c8"/><rect x="892.66" y="2.5" width="1.5" height="4" fill="#c8c8c8"/><rect x="902.87" y="2.5" width="1.5" height="4" fill="#c8c8c8"/><rect x="913.08" y="2.5" width="1.5" height="4" fill="#c8c8c8"/><rect x="923.29" y="2.5" width="1.5" height="4" fill="#c8c8c8"/><rect x="933.50" y="2.5" width="1.5" height="4" fill="#c8c8c8"/><rect x="943.71" y="2.5" width="1.5" height="4" fill="#c8c8c8"/><rect x="14.80" y="-1" width="1.1" height="7.5" fill="#c0c0c0"/><rect x="321.10" y="-19.5" width="1.1" height="26" fill="#c0c0c0"/><rect x="627.40" y="-19.5" width="1.1" height="26" fill="#c0c0c0"/><rect x="933.70" y="-19.5" width="1.1" height="26" fill="#c0c0c0"/></svg><div style="left:67px;top:884px;width:12px;height:20px;background:#7072b8;border-radius:0px;"></div><div style="left:56.6px;top:915px;width:93px;height:22px;background:#1c1c1c;border-radius:4px;"></div><div style="left:159px;top:915.5px;width:749px;height:20.5px;background:#3a3a3a;border-radius:4px;"></div><div style="left:165px;top:918px;width:1px;height:15px;background:#555;border-radius:0px;"></div><div style="left:168px;top:918px;width:1px;height:15px;background:#555;border-radius:0px;"></div><div style="left:905px;top:918px;width:1px;height:15px;background:#555;border-radius:0px;"></div><div style="left:902px;top:918px;width:1px;height:15px;background:#555;border-radius:0px;"></div><div style="left:916px;top:915px;width:93px;height:22px;background:#1c1c1c;border-radius:4px;"></div><svg style="left:0px;top:0px;" width="1443" height="946" viewBox="0 0 1443 946"><defs><clipPath id="c1"><rect x="47" y="132" width="478" height="334"/></clipPath><clipPath id="c2"><rect x="530" y="132" width="477" height="334"/></clipPath><clipPath id="c3"><rect x="47" y="498" width="478" height="335"/></clipPath><clipPath id="c4"><rect x="529" y="498" width="479" height="335"/></clipPath></defs><g clip-path="url(#c1)"><line x1="47" y1="282" x2="525" y2="282" stroke="#4c4c4c" stroke-width="2"/><line x1="175" y1="131.3" x2="466" y2="281.7" stroke="#333" stroke-width="1.1"/><line x1="47" y1="237.2" x2="525" y2="214.4" stroke="#3e3e3e" stroke-width="1.2"/><line x1="351.8" y1="222.7" x2="482" y2="216.5" stroke="#e04848" stroke-width="1.4"/><line x1="291.3" y1="154.4" x2="441.9" y2="138.6" stroke="#a8cbee" stroke-width="1.4"/><line x1="441.9" y1="138.6" x2="440" y2="299.4" stroke="#3d8fe6" stroke-width="1.5"/><line x1="440" y1="299.4" x2="290.9" y2="297.5" stroke="#a8cbee" stroke-width="1.4"/><line x1="290.9" y1="297.5" x2="291.3" y2="154.4" stroke="#a8cbee" stroke-width="1.4"/><circle cx="291.3" cy="154.4" r="3.2" fill="#333"/><circle cx="441.9" cy="138.6" r="3.2" fill="#333"/><circle cx="440" cy="299.4" r="3.2" fill="#333"/><circle cx="290.9" cy="297.5" r="3.2" fill="#333"/><line x1="329" y1="186.5" x2="396.6" y2="181" stroke="#3d8fe6" stroke-width="1.5"/><line x1="396.6" y1="181" x2="414.7" y2="237" stroke="#a8cbee" stroke-width="1.3"/><line x1="414.7" y1="237" x2="329" y2="239.8" stroke="#a8cbee" stroke-width="1.3"/><line x1="329" y1="239.8" x2="329" y2="186.5" stroke="#b8c4d0" stroke-width="1.4"/><circle cx="396.6" cy="181" r="3.2" fill="#333"/><circle cx="414.7" cy="237" r="3.2" fill="#333"/><line x1="352.4" y1="132" x2="352.4" y2="222.3" stroke="#38b060" stroke-width="1.1"/><line x1="329" y1="186.5" x2="329.0" y2="161.0" stroke="#3fcf6a" stroke-width="2.2"/><path d="M329 150 L333.0 161.0 L325.0 161.0Z" fill="#3fcf6a"/><line x1="336.6" y1="217.2" x2="376.6" y2="234.7" stroke="#3d8fe6" stroke-width="1.6"/><circle cx="350" cy="223.8" r="3.2" fill="#3d8fe6"/><line x1="357.2" y1="211.8" x2="419.6218341297993" y2="208.53559285800793" stroke="#e04848" stroke-width="1.6"/><path d="M435.6 207.7 L419.856844621114 213.0294520090019 L419.3868236384846 204.04173370701398Z" fill="#e04848"/><line x1="377.5" y1="219.5" x2="392.44004737691535" y2="217.9994712241526" stroke="#3fcf6a" stroke-width="1.6"/><path d="M400.4 217.2 L392.7398490859726 220.9844534578093 L392.1402456678581 215.01448899049586Z" fill="#3fcf6a"/><path d="M365 147.7 L391.8 144.8 L391.8 170.5" fill="none" stroke="#3d8fe6" stroke-width="1.8"/><path d="M379 146.3 L391.8 158 L391.8 144.8Z" fill="#3d8fe6" opacity="0.35"/><path d="M338.5 160.5 L344.2 166 L344.2 187" fill="none" stroke="#e04848" stroke-width="1.6"/><circle cx="329" cy="213.4" r="3.5" fill="none" stroke="#8a8a8a" stroke-width="1.2"/><rect x="326.25" y="183.75" width="5.5" height="5.5" fill="#f0a040"/><rect x="326.25" y="237.05" width="5.5" height="5.5" fill="#f0a040"/><line x1="483" y1="151" x2="483" y2="174" stroke="#3fcf6a" stroke-width="2"/><line x1="483" y1="174" x2="503" y2="174" stroke="#e04848" stroke-width="2"/><text x="479.5" y="148" font-size="12" font-family="Liberation Sans" fill="#3fcf6a">Y</text><text x="496" y="179" font-size="12" font-family="Liberation Sans" fill="#3d8fe6">Z</text><text x="509" y="181" font-size="12" font-family="Liberation Sans" fill="#e04848">X</text></g><g clip-path="url(#c2)"><line x1="530" y1="298.6" x2="687.5" y2="298.6" stroke="#474747" stroke-width="1.6"/><line x1="768.3" y1="298.6" x2="768.3" y2="466" stroke="#404040" stroke-width="1.4"/><line x1="768.5" y1="132" x2="768.5" y2="298.6" stroke="#2f6fd6" stroke-width="1.6"/><path d="M763.5 138 L768.5 133 L773.5 138" fill="none" stroke="#2f6fd6" stroke-width="1.3"/><line x1="768.3" y1="298.6" x2="1005" y2="298.6" stroke="#c84a4a" stroke-width="1.5"/><path d="M1000 293.6 L1005 298.6 L1000 303.6" fill="none" stroke="#c84a4a" stroke-width="1.3"/><line x1="687.5" y1="298.6" x2="768.3" y2="298.6" stroke="#a8cbee" stroke-width="2.2"/><line x1="843.8" y1="298.6" x2="873.5" y2="298.6" stroke="#a8cbee" stroke-width="2.2"/><line x1="768.3" y1="298.6" x2="825" y2="298.6" stroke="#e04848" stroke-width="2.2"/><circle cx="687.5" cy="298.6" r="3.2" fill="#333"/><circle cx="822.5" cy="298.6" r="3.2" fill="#333"/><circle cx="843.8" cy="298.6" r="3.2" fill="#333"/><circle cx="873.5" cy="298.6" r="3.2" fill="#333"/><path d="M839.2 298.6 L824.7 293.8 L824.7 303.4Z" fill="#e04848"/><rect x="735.6" y="295.6" width="6" height="6" fill="#35d060"/><line x1="738.9" y1="270.7" x2="738.9" y2="211.8" stroke="#3d8fe6" stroke-width="2.2"/><path d="M738.9 196.8 L742.9 211.8 L734.9 211.8Z" fill="#3d8fe6"/><path d="M775.2 237.6 L800.4 237.6 L800.4 261.6" fill="none" stroke="#3fcf6a" stroke-width="1.8"/><path d="M788.9 237.6 L800.4 249.4 L800.4 237.6Z" fill="#3fcf6a" opacity="0.3"/><line x1="788.9" y1="237.6" x2="800.4" y2="249.4" stroke="#3fcf6a" stroke-width="1.2"/><line x1="965" y1="151" x2="965" y2="174" stroke="#3d8fe6" stroke-width="2"/><line x1="966" y1="174" x2="988" y2="174" stroke="#e04848" stroke-width="2"/><text x="961.5" y="148" font-size="12" font-family="Liberation Sans" fill="#3d8fe6">Z</text><text x="961.5" y="181" font-size="12" font-family="Liberation Sans" fill="#3fcf6a">Y</text><text x="993" y="181" font-size="12" font-family="Liberation Sans" fill="#e04848">X</text></g><g clip-path="url(#c3)"><line x1="47" y1="666" x2="286" y2="666" stroke="#474747" stroke-width="1.6"/><line x1="286" y1="666" x2="286" y2="833" stroke="#404040" stroke-width="1.4"/><line x1="286" y1="498" x2="286" y2="666" stroke="#38b060" stroke-width="1.2"/><path d="M281 504 L286 499 L291 504" fill="none" stroke="#3fcf6a" stroke-width="1.3"/><line x1="286" y1="666" x2="523" y2="666" stroke="#3070d0" stroke-width="1.3"/><path d="M518 661 L523 666 L518 671" fill="none" stroke="#3d8fe6" stroke-width="1.3"/><line x1="286" y1="618.6" x2="286" y2="760.4" stroke="#5a9ad8" stroke-width="2.6"/><line x1="286" y1="618.6" x2="286.0" y2="565.0" stroke="#3fcf6a" stroke-width="2.6"/><path d="M286 551 L290.0 565.0 L282.0 565.0Z" fill="#3fcf6a"/><circle cx="286" cy="573.6" r="2.8" fill="#333"/><circle cx="286" cy="618.6" r="2.8" fill="#333"/><circle cx="286" cy="686" r="2.8" fill="#333"/><circle cx="286" cy="760.4" r="3" fill="#333"/><rect x="283.0" y="649.8" width="6" height="6" fill="#e04848"/><line x1="314.3" y1="652.8" x2="371.4" y2="652.8" stroke="#3d8fe6" stroke-width="2"/><path d="M387.4 652.8 L371.4 657.3 L371.4 648.3Z" fill="#3d8fe6"/><path d="M323 591.3 L347 591.3 L347 615.4" fill="none" stroke="#e04848" stroke-width="1.6"/><path d="M335 591.3 L347 603.3 L347 591.3Z" fill="#e04848" opacity="0.35"/><line x1="483" y1="518" x2="483" y2="541" stroke="#3fcf6a" stroke-width="2"/><line x1="483" y1="541" x2="506" y2="541" stroke="#3d8fe6" stroke-width="2"/><text x="479.5" y="515" font-size="12" font-family="Liberation Sans" fill="#3fcf6a">Y</text><text x="479" y="547" font-size="12" font-family="Liberation Sans" fill="#e04848">X</text><text x="510" y="548" font-size="12" font-family="Liberation Sans" fill="#3d8fe6">Z</text></g><g clip-path="url(#c4)"><line x1="529" y1="663.5" x2="748.5" y2="663.5" stroke="#474747" stroke-width="1.6"/><line x1="748.5" y1="663.5" x2="748.5" y2="833" stroke="#404040" stroke-width="1.4"/><line x1="748.5" y1="498" x2="748.5" y2="663.5" stroke="#38b060" stroke-width="1.1"/><path d="M743.5 504 L748.5 499 L753.5 504" fill="none" stroke="#38b060" stroke-width="1.3"/><line x1="748.5" y1="663.5" x2="1005" y2="663.5" stroke="#c84a4a" stroke-width="1.2"/><path d="M1000 658.6 L1005 663.6 L1000 668.6" fill="none" stroke="#c84a4a" stroke-width="1.3"/><line x1="610.4" y1="507.8" x2="926.8" y2="507.8" stroke="#a8cbee" stroke-width="1.8"/><line x1="926.8" y1="507.8" x2="926.8" y2="823.9" stroke="#3d8fe6" stroke-width="2"/><line x1="926.8" y1="823.9" x2="610.4" y2="823.9" stroke="#a8cbee" stroke-width="1.8"/><line x1="610.4" y1="823.9" x2="610.4" y2="507.8" stroke="#a8cbee" stroke-width="1.8"/><circle cx="610.4" cy="507.8" r="3.2" fill="#333"/><circle cx="926.8" cy="507.8" r="3.2" fill="#333"/><circle cx="926.8" cy="823.9" r="3.2" fill="#333"/><circle cx="610.4" cy="823.9" r="3.2" fill="#333"/><line x1="697" y1="584" x2="840" y2="584" stroke="#3d8fe6" stroke-width="1.8"/><line x1="840" y1="584" x2="876" y2="698" stroke="#a8cbee" stroke-width="1.6"/><line x1="876" y1="698" x2="697" y2="698" stroke="#a8cbee" stroke-width="1.6"/><line x1="697" y1="698" x2="697" y2="584" stroke="#d8e4f0" stroke-width="1.8"/><circle cx="840" cy="584" r="3.2" fill="#333"/><circle cx="876" cy="698" r="3.2" fill="#333"/><line x1="697" y1="612.6" x2="697.0" y2="555.3" stroke="#3fcf6a" stroke-width="2.4"/><path d="M697 540.3 L701.0 555.3 L693.0 555.3Z" fill="#3fcf6a"/><circle cx="697" cy="641.5" r="3.2" fill="#3d8fe6"/><line x1="724.8" y1="641.5" x2="783.0" y2="641.5" stroke="#e04848" stroke-width="1.6"/><path d="M799 641.5 L783.0 646.0 L783.0 637.0Z" fill="#e04848"/><path d="M734.9 579.7 L759 579.7 L759 603.8" fill="none" stroke="#3d8fe6" stroke-width="1.8"/><path d="M747 579.7 L759 591.7 L759 579.7Z" fill="#3d8fe6" opacity="0.35"/><rect x="694.0" y="581.0" width="6" height="6" fill="#f0a040"/><rect x="694.0" y="695.0" width="6" height="6" fill="#f0a040"/><line x1="966" y1="518" x2="966" y2="541" stroke="#3fcf6a" stroke-width="2"/><line x1="966" y1="541" x2="988" y2="541" stroke="#e04848" stroke-width="2"/><text x="962" y="515" font-size="12" font-family="Liberation Sans" fill="#3fcf6a">Y</text><text x="962" y="548" font-size="12" font-family="Liberation Sans" fill="#3d8fe6">Z</text><text x="991" y="548" font-size="12" font-family="Liberation Sans" fill="#e04848">X</text><path d="M700.5 669.4 L745.4 662.1 L737.1 673.8 L758.1 677.2 L757.1 683 L736.3 679.7 L739.3 692.7Z" fill="#ff00dc"/></g></svg><svg style="left:55px;top:67px;" width="35" height="34" viewBox="0 0 35 34"><rect x="8" y="7.5" width="20" height="5" rx="1.5" fill="none" stroke="#c2c2c2" stroke-width="1.8"/><rect x="9" y="12.5" width="18" height="15" rx="1.5" fill="none" stroke="#c2c2c2" stroke-width="1.8"/><rect x="15" y="17.5" width="6" height="2" fill="#c2c2c2"/></svg><svg style="left:103.0px;top:67px;" width="35" height="34" viewBox="0 0 35 34"><text x="17.5" y="21" font-size="16" text-anchor="middle" font-family="Liberation Sans" fill="#c2c2c2">X</text><rect x="8" y="25" width="19" height="2" rx="1" fill="#e05050"/></svg><svg style="left:137.75px;top:67px;" width="35" height="34" viewBox="0 0 35 34"><text x="17.5" y="21" font-size="16" text-anchor="middle" font-family="Liberation Sans" fill="#c2c2c2">Y</text><rect x="8" y="25" width="19" height="2" rx="1" fill="#4cd070"/></svg><svg style="left:172.5px;top:67px;" width="35" height="34" viewBox="0 0 35 34"><text x="17.5" y="21" font-size="16" text-anchor="middle" font-family="Liberation Sans" fill="#c2c2c2">Z</text><rect x="8" y="25" width="19" height="2" rx="1" fill="#3d8fe6"/></svg><svg style="left:207px;top:67px;" width="35" height="34" viewBox="0 0 35 34"><path d="M17.5 5 V12 M14.5 8 L17.5 5 L20.5 8" fill="none" stroke="#c2c2c2" stroke-width="1.6"/><path d="M12 15 L17.5 12 L23 15 V21 L17.5 24 L12 21Z M12 15 L17.5 18 L23 15 M17.5 18 V24" fill="none" stroke="#c2c2c2" stroke-width="1.3"/><path d="M12 21 L7 26 M7 22 V26 H11 M23 21 L28 26 M28 22 V26 H24" fill="none" stroke="#c2c2c2" stroke-width="1.6"/></svg><svg style="left:257px;top:67px;" width="35" height="34" viewBox="0 0 35 34"><polygon points="17.00,7.00 8.77,11.75 8.77,21.25 17.00,26.00 25.23,21.25 25.23,11.75" fill="none" stroke="#c8c8d8" stroke-width="1.8"/><circle cx="17" cy="16.5" r="2.6" fill="#eee"/></svg><svg style="left:291px;top:67px;" width="35" height="34" viewBox="0 0 35 34"><polygon points="17.50,7.00 9.27,11.75 9.27,21.25 17.50,26.00 25.73,21.25 25.73,11.75" fill="none" stroke="#c2c2c2" stroke-width="1.8" stroke-dasharray="25.5 6 57 0"/><rect x="16.5" y="13" width="2.4" height="14" fill="#eee"/></svg><svg style="left:326px;top:67px;" width="35" height="34" viewBox="0 0 35 34"><polygon points="17.50,7.00 9.27,11.75 9.27,21.25 17.50,26.00 25.73,21.25 25.73,11.75" fill="none" stroke="#9a9a9a" stroke-width="1.6"/><path d="M17.5 16.5 L26 12 V21.5 L17.5 26Z" fill="#f0f0f0"/></svg><svg style="left:361px;top:67px;" width="35" height="34" viewBox="0 0 35 34"><polygon points="17.50,6.50 8.84,11.50 8.84,21.50 17.50,26.50 26.16,21.50 26.16,11.50" fill="none" stroke="#f4f4f4" stroke-width="1.8"/><path d="M17.5 9 L24.5 13 V21 L17.5 25 L10.5 21 V13Z" fill="#9c9c9c"/><path d="M17.5 17 L24.5 13 V21 L17.5 25Z" fill="#7c7c7c"/></svg><svg style="left:396px;top:67px;" width="35" height="34" viewBox="0 0 35 34"><path d="M9 12 L16 8 L23 12 V21 L16 25 L9 21Z" fill="#bdbdbd"/><path d="M16 17 L23 12 V21 L16 25Z" fill="#8a8a8a"/><rect x="19" y="16" width="5" height="5" fill="#fafafa"/><rect x="23" y="20" width="5" height="5" fill="#fafafa"/></svg><svg style="left:389px;top:94px;" width="7" height="7" viewBox="0 0 7 7"><path d="M7 0 L7 7 L0 7Z" fill="#8a8a8a"/></svg><svg style="left:444px;top:67px;" width="35" height="34" viewBox="0 0 35 34"><path d="M17.5 17 V6 M14 9.5 L17.5 6 L21 9.5 M17.5 17 L8 24 M8 19.5 V24 H12.5 M17.5 17 L27 24 M27 19.5 V24 H22.5" fill="none" stroke="#c2c2c2" stroke-width="1.8"/></svg><div style="left:543px;top:68px;width:1px;height:32px;background:#303030;border-radius:0px;"></div><svg style="left:509px;top:67px;" width="35" height="34" viewBox="0 0 35 34"><path d="M11 14 V21 A6.5 6.5 0 0 0 24 21 V14" fill="none" stroke="#c2c2c2" stroke-width="4.5"/><path d="M13 9 L18 7 L16 9 L22 8" fill="none" stroke="#c2c2c2" stroke-width="1.6"/></svg><svg style="left:536px;top:94px;" width="7" height="7" viewBox="0 0 7 7"><path d="M7 0 L7 7 L0 7Z" fill="#8a8a8a"/></svg><svg style="left:543px;top:67px;" width="35" height="34" viewBox="0 0 35 34"><circle cx="17.5" cy="20" r="5.25" fill="#c2c2c2"/><rect x="15.68" y="13" width="3.64" height="14" rx="0.56" fill="#c2c2c2" transform="rotate(0.0 17.5 20)"/><rect x="15.68" y="13" width="3.64" height="14" rx="0.56" fill="#c2c2c2" transform="rotate(60.0 17.5 20)"/><rect x="15.68" y="13" width="3.64" height="14" rx="0.56" fill="#c2c2c2" transform="rotate(120.0 17.5 20)"/><circle cx="17.5" cy="20" r="2.1" fill="#3a3a3a"/><path d="M12 9 L17 7 L15 9 L21 8" fill="none" stroke="#c2c2c2" stroke-width="1.6"/></svg><div style="left:626px;top:67px;width:34px;height:34px;background:#5b5ea6;border-radius:0px;border-radius:0 4px 4px 0;"></div><svg style="left:592px;top:67px;" width="35" height="34" viewBox="0 0 35 34"><path d="M12 7 V27 M22 7 V27 M7 12 H27 M7 22 H27" stroke="#c2c2c2" stroke-width="1.9"/></svg><svg style="left:626px;top:67px;" width="35" height="34" viewBox="0 0 35 34"><path d="M12 7 V27 M22 7 V18 M7 12 H27 M7 22 H16" stroke="#c2c2c2" stroke-width="1.9"/><rect x="18.5" y="19" width="9" height="7" rx="1" fill="#c2c2c2"/><path d="M20.5 19 V17 A2.5 2.5 0 0 1 25.5 17 V19" fill="none" stroke="#c2c2c2" stroke-width="1.4"/></svg><svg style="left:653px;top:94px;" width="7" height="7" viewBox="0 0 7 7"><path d="M7 0 L7 7 L0 7Z" fill="#9a9ab0"/></svg><div style="left:709px;top:68px;width:1px;height:32px;background:#303030;border-radius:0px;"></div><svg style="left:674px;top:67px;" width="35" height="34" viewBox="0 0 35 34"><circle cx="17.5" cy="17" r="10.5" fill="none" stroke="#c2c2c2" stroke-width="1.7"/><circle cx="17.5" cy="17" r="7" fill="none" stroke="#c2c2c2" stroke-width="1.7"/><circle cx="17.5" cy="17" r="3.6" fill="#c2c2c2"/></svg><svg style="left:709px;top:67px;" width="35" height="34" viewBox="0 0 35 34"><circle cx="17.5" cy="17" r="10.5" fill="none" stroke="#c2c2c2" stroke-width="1.7"/><circle cx="17.5" cy="17" r="4.125" fill="#c2c2c2"/><rect x="16.07" y="11.5" width="2.8600000000000003" height="11.0" rx="0.44" fill="#c2c2c2" transform="rotate(0.0 17.5 17)"/><rect x="16.07" y="11.5" width="2.8600000000000003" height="11.0" rx="0.44" fill="#c2c2c2" transform="rotate(60.0 17.5 17)"/><rect x="16.07" y="11.5" width="2.8600000000000003" height="11.0" rx="0.44" fill="#c2c2c2" transform="rotate(120.0 17.5 17)"/><circle cx="17.5" cy="17" r="1.65" fill="#3a3a3a"/></svg><div style="left:791px;top:68px;width:1px;height:32px;background:#303030;border-radius:0px;"></div><svg style="left:757px;top:67px;" width="35" height="34" viewBox="0 0 35 34"><rect x="16" y="5.7" width="1.9" height="22.5" fill="#c2c2c2"/><path d="M14.3 17 C13 11 10 8 6.5 8 C6 12 8 16 12.5 17 C8 18.5 7 22 8.5 24.8 C10.5 27 13.5 25 14.3 17Z" fill="none" stroke="#c2c2c2" stroke-width="1.5"/><path d="M19.3 17 C20 10 24 8 27.8 8 C28.2 13 26 16 23.5 17.5 C26 19 26.5 23 24 25.8 C21 27 19.3 23 19.3 17Z" fill="#c2c2c2"/></svg><svg style="left:791px;top:67px;" width="35" height="34" viewBox="0 0 35 34"><path d="M13.5 6 C7.5 11 7.5 23 13.5 28" fill="none" stroke="#c2c2c2" stroke-width="1.8"/><circle cx="21.2" cy="17" r="5.25" fill="#c2c2c2"/><rect x="19.38" y="10" width="3.64" height="14" rx="0.56" fill="#c2c2c2" transform="rotate(0.0 21.2 17)"/><rect x="19.38" y="10" width="3.64" height="14" rx="0.56" fill="#c2c2c2" transform="rotate(60.0 21.2 17)"/><rect x="19.38" y="10" width="3.64" height="14" rx="0.56" fill="#c2c2c2" transform="rotate(120.0 21.2 17)"/><circle cx="21.2" cy="17" r="2.1" fill="#3a3a3a"/></svg><div style="left:888px;top:68px;width:1px;height:32px;background:#303030;border-radius:0px;"></div><div style="left:922px;top:68px;width:1px;height:32px;background:#303030;border-radius:0px;"></div><svg style="left:853px;top:67px;" width="35" height="34" viewBox="0 0 35 34"><rect x="8" y="8" width="19" height="18" fill="none" stroke="#c2c2c2" stroke-width="1.6"/><rect x="6" y="6" width="4" height="4" fill="#3a3a3a" stroke="#c2c2c2" stroke-width="1.3"/><rect x="25" y="6" width="4" height="4" fill="#3a3a3a" stroke="#c2c2c2" stroke-width="1.3"/><rect x="6" y="24" width="4" height="4" fill="#3a3a3a" stroke="#c2c2c2" stroke-width="1.3"/><rect x="25" y="24" width="4" height="4" fill="#3a3a3a" stroke="#c2c2c2" stroke-width="1.3"/></svg><svg style="left:888px;top:67px;" width="35" height="34" viewBox="0 0 35 34"><rect x="6" y="11" width="23" height="16" rx="2" fill="#c2c2c2"/><path d="M8 6 L10.5 10 M13 6 L15.5 10 M18 6 L20.5 10 M23 6 L25.5 10" stroke="#c2c2c2" stroke-width="2"/><path d="M15 14.5 L21 19 L15 23.5Z" fill="#333"/></svg><svg style="left:922px;top:67px;" width="35" height="34" viewBox="0 0 35 34"><rect x="6" y="11" width="23" height="16" rx="2" fill="#c2c2c2"/><path d="M8 6 L10.5 10 M13 6 L15.5 10 M18 6 L20.5 10 M23 6 L25.5 10" stroke="#c2c2c2" stroke-width="2"/><circle cx="17.5" cy="19" r="4.125" fill="#3a3a3a"/><rect x="16.07" y="13.5" width="2.8600000000000003" height="11.0" rx="0.44" fill="#3a3a3a" transform="rotate(0.0 17.5 19)"/><rect x="16.07" y="13.5" width="2.8600000000000003" height="11.0" rx="0.44" fill="#3a3a3a" transform="rotate(60.0 17.5 19)"/><rect x="16.07" y="13.5" width="2.8600000000000003" height="11.0" rx="0.44" fill="#3a3a3a" transform="rotate(120.0 17.5 19)"/><circle cx="17.5" cy="19" r="1.65" fill="#c2c2c2"/></svg><svg style="left:881px;top:94px;" width="7" height="7" viewBox="0 0 7 7"><path d="M7 0 L7 7 L0 7Z" fill="#8a8a8a"/></svg><svg style="left:915px;top:94px;" width="7" height="7" viewBox="0 0 7 7"><path d="M7 0 L7 7 L0 7Z" fill="#8a8a8a"/></svg><svg style="left:950px;top:94px;" width="7" height="7" viewBox="0 0 7 7"><path d="M7 0 L7 7 L0 7Z" fill="#8a8a8a"/></svg><svg style="left:970px;top:67px;" width="35" height="34" viewBox="0 0 35 34"><circle cx="17.5" cy="15" r="8" fill="none" stroke="#c2c2c2" stroke-width="1.8"/><path d="M14 12 A4 4 0 0 1 17 9.5" fill="none" stroke="#c2c2c2" stroke-width="1.2"/><path d="M8 21 Q9 27 17.5 27 Q26 27 27 21" fill="none" stroke="#c2c2c2" stroke-width="2.2"/></svg><svg style="left:46px;top:72px;" width="6" height="26" viewBox="0 0 6 26"><rect x="0" y="0" width="2" height="2" fill="#3e3e3e"/><rect x="4" y="0" width="2" height="2" fill="#3e3e3e"/><rect x="0" y="4" width="2" height="2" fill="#3e3e3e"/><rect x="4" y="4" width="2" height="2" fill="#3e3e3e"/><rect x="0" y="8" width="2" height="2" fill="#3e3e3e"/><rect x="4" y="8" width="2" height="2" fill="#3e3e3e"/><rect x="0" y="12" width="2" height="2" fill="#3e3e3e"/><rect x="4" y="12" width="2" height="2" fill="#3e3e3e"/><rect x="0" y="16" width="2" height="2" fill="#3e3e3e"/><rect x="4" y="16" width="2" height="2" fill="#3e3e3e"/><rect x="0" y="20" width="2" height="2" fill="#3e3e3e"/><rect x="4" y="20" width="2" height="2" fill="#3e3e3e"/><rect x="0" y="24" width="2" height="2" fill="#3e3e3e"/><rect x="4" y="24" width="2" height="2" fill="#3e3e3e"/></svg><svg style="left:2px;top:67px;" width="40" height="6" viewBox="0 0 40 6"><rect x="0" y="0" width="2" height="2" fill="#3e3e3e"/><rect x="0" y="4" width="2" height="2" fill="#3e3e3e"/><rect x="4" y="0" width="2" height="2" fill="#3e3e3e"/><rect x="4" y="4" width="2" height="2" fill="#3e3e3e"/><rect x="8" y="0" width="2" height="2" fill="#3e3e3e"/><rect x="8" y="4" width="2" height="2" fill="#3e3e3e"/><rect x="12" y="0" width="2" height="2" fill="#3e3e3e"/><rect x="12" y="4" width="2" height="2" fill="#3e3e3e"/><rect x="16" y="0" width="2" height="2" fill="#3e3e3e"/><rect x="16" y="4" width="2" height="2" fill="#3e3e3e"/><rect x="20" y="0" width="2" height="2" fill="#3e3e3e"/><rect x="20" y="4" width="2" height="2" fill="#3e3e3e"/><rect x="24" y="0" width="2" height="2" fill="#3e3e3e"/><rect x="24" y="4" width="2" height="2" fill="#3e3e3e"/><rect x="28" y="0" width="2" height="2" fill="#3e3e3e"/><rect x="28" y="4" width="2" height="2" fill="#3e3e3e"/><rect x="32" y="0" width="2" height="2" fill="#3e3e3e"/><rect x="32" y="4" width="2" height="2" fill="#3e3e3e"/><rect x="36" y="0" width="2" height="2" fill="#3e3e3e"/><rect x="36" y="4" width="2" height="2" fill="#3e3e3e"/></svg><svg style="left:1016px;top:67px;" width="36" height="6" viewBox="0 0 36 6"><rect x="0" y="0" width="2" height="2" fill="#3e3e3e"/><rect x="0" y="4" width="2" height="2" fill="#3e3e3e"/><rect x="4" y="0" width="2" height="2" fill="#3e3e3e"/><rect x="4" y="4" width="2" height="2" fill="#3e3e3e"/><rect x="8" y="0" width="2" height="2" fill="#3e3e3e"/><rect x="8" y="4" width="2" height="2" fill="#3e3e3e"/><rect x="12" y="0" width="2" height="2" fill="#3e3e3e"/><rect x="12" y="4" width="2" height="2" fill="#3e3e3e"/><rect x="16" y="0" width="2" height="2" fill="#3e3e3e"/><rect x="16" y="4" width="2" height="2" fill="#3e3e3e"/><rect x="20" y="0" width="2" height="2" fill="#3e3e3e"/><rect x="20" y="4" width="2" height="2" fill="#3e3e3e"/><rect x="24" y="0" width="2" height="2" fill="#3e3e3e"/><rect x="24" y="4" width="2" height="2" fill="#3e3e3e"/><rect x="28" y="0" width="2" height="2" fill="#3e3e3e"/><rect x="28" y="4" width="2" height="2" fill="#3e3e3e"/><rect x="32" y="0" width="2" height="2" fill="#3e3e3e"/><rect x="32" y="4" width="2" height="2" fill="#3e3e3e"/></svg><svg style="left:8px;top:5px;" width="60" height="22" viewBox="0 0 60 22"><path d="M7 4 L3 8 L7 12 M3 8 H13 A5.5 5.5 0 0 1 13 19 H6" fill="none" stroke="#bdbdbd" stroke-width="2"/><path d="M41 4 L45 8 L41 12 M45 8 H35 A5.5 5.5 0 0 0 35 19 H42" fill="none" stroke="#555" stroke-width="2"/></svg><svg style="left:185px;top:13px;" width="12" height="12" viewBox="0 0 12 12"><path d="M2 2 L10 10 M10 2 L2 10" stroke="#d0d0d0" stroke-width="1.8"/></svg><svg style="left:218px;top:10px;" width="14" height="14" viewBox="0 0 14 14"><path d="M7 1 V13 M1 7 H13" stroke="#e0e0e0" stroke-width="2.4"/></svg><svg style="left:1410px;top:5px;" width="9" height="20" viewBox="0 0 9 20"><circle cx="4.5" cy="3" r="2" fill="#c8c8c8"/><circle cx="4.5" cy="10" r="2" fill="#c8c8c8"/><circle cx="4.5" cy="17" r="2" fill="#c8c8c8"/></svg><div style="left:0px;top:203px;width:44px;height:1px;background:#303030;border-radius:0px;"></div><div style="left:0px;top:305px;width:44px;height:1px;background:#303030;border-radius:0px;"></div><div style="left:0px;top:350px;width:44px;height:1px;background:#303030;border-radius:0px;"></div><div style="left:0px;top:454px;width:44px;height:1px;background:#303030;border-radius:0px;"></div><div style="left:0px;top:561px;width:44px;height:1px;background:#303030;border-radius:0px;"></div><svg style="left:0px;top:104px;" width="44" height="42" viewBox="0 0 44 42"><circle cx="19.5" cy="15.5" r="8" fill="none" stroke="#c2c2c2" stroke-width="2"/><path d="M25.5 21.5 L33 29" stroke="#c2c2c2" stroke-width="2.4"/></svg><svg style="left:0px;top:159px;" width="44" height="44" viewBox="0 0 44 44"><rect x="9" y="9" width="26" height="26" rx="3" fill="none" stroke="#f0a030" stroke-width="2.6" stroke-dasharray="4 3"/><path d="M18 14 L29 24 L23 24.5 L18 30Z" fill="#c0c0c0"/></svg><svg style="left:37px;top:196px;" width="7" height="7" viewBox="0 0 7 7"><path d="M7 0 L7 7 L0 7Z" fill="#a8a8c0"/></svg><svg style="left:0px;top:203px;" width="44" height="45" viewBox="0 0 44 45"><path d="M9 9 H35 M9 36 H35 M9 9 V36 M35 9 V36" fill="none" stroke="#7a5a38" stroke-width="2.4" stroke-dasharray="9 4"/><path d="M18 14 L29 24 L23 24.5 L18 30Z" fill="#555"/></svg><svg style="left:37px;top:241px;" width="7" height="7" viewBox="0 0 7 7"><path d="M7 0 L7 7 L0 7Z" fill="#8a8a8a"/></svg><svg style="left:0px;top:262px;" width="44" height="43" viewBox="0 0 44 43"><path d="M22 7 V37 M7 22 H37" stroke="#c2c2c2" stroke-width="2.2"/><path d="M17 12 L22 7 L27 12 M17 32 L22 37 L27 32 M12 17 L7 22 L12 27 M32 17 L37 22 L32 27" fill="none" stroke="#c2c2c2" stroke-width="2.2"/></svg><svg style="left:0px;top:305px;" width="44" height="45" viewBox="0 0 44 45"><path d="M16 10 A12 12 0 0 0 19 34 M28 34 A12 12 0 0 0 25 10" fill="none" stroke="#c2c2c2" stroke-width="2.2"/><path d="M13 30 L19 34 L14 39 M31 14 L25 10 L30 5" fill="none" stroke="#c2c2c2" stroke-width="2.2"/></svg><svg style="left:0px;top:350px;" width="44" height="46" viewBox="0 0 44 46"><path d="M14 12 H33 V32 H24" fill="none" stroke="#c2c2c2" stroke-width="2.2"/><path d="M14 12 V20 M20 18 H27 V25" fill="none" stroke="#c2c2c2" stroke-width="2"/><rect x="8" y="23" width="13" height="13" rx="3" fill="#c2c2c2"/></svg><svg style="left:0px;top:409px;" width="44" height="45" viewBox="0 0 44 45"><path d="M8 29 Q22 40 36 29" fill="none" stroke="#c2c2c2" stroke-width="2"/><circle cx="8" cy="29" r="3" fill="#f0a030"/><circle cx="36" cy="29" r="3" fill="#f0a030"/><path d="M21 19 L28 8 L34 12 L27 21 Z" fill="#c2c2c2"/><path d="M21 19 L19 24" stroke="#c2c2c2" stroke-width="1.5"/></svg><svg style="left:37px;top:447px;" width="7" height="7" viewBox="0 0 7 7"><path d="M7 0 L7 7 L0 7Z" fill="#8a8a8a"/></svg><svg style="left:0px;top:467px;" width="44" height="44" viewBox="0 0 44 44"><circle cx="22" cy="22" r="15" fill="none" stroke="#c2c2c2" stroke-width="2"/><circle cx="22" cy="22" r="9" fill="none" stroke="#f0a030" stroke-width="2.6"/></svg><svg style="left:0px;top:517px;" width="44" height="44" viewBox="0 0 44 44"><path d="M7 16 L22 24 L37 16" fill="none" stroke="#c2c2c2" stroke-width="2"/><circle cx="22" cy="24" r="3" fill="#f0a030"/><path d="M8 31 Q22 41 36 31" fill="none" stroke="#c2c2c2" stroke-width="2"/><circle cx="8" cy="31" r="3" fill="#f0a030"/><circle cx="36" cy="31" r="3" fill="#f0a030"/></svg><svg style="left:37px;top:554px;" width="7" height="7" viewBox="0 0 7 7"><path d="M7 0 L7 7 L0 7Z" fill="#8a8a8a"/></svg><svg style="left:0px;top:561px;" width="44" height="45" viewBox="0 0 44 45"><g stroke="#555" fill="none" stroke-width="1.4"><rect x="7" y="11" width="4" height="4"/><rect x="33" y="11" width="4" height="4"/><rect x="7" y="31" width="4" height="4"/><rect x="33" y="31" width="4" height="4"/><rect x="20" y="5" width="4" height="4"/><rect x="20" y="37" width="4" height="4"/></g><path d="M15 24 Q22 14 29 24 V32 H15Z" fill="#555"/></svg><svg style="left:426px;top:106px;" width="100" height="24" viewBox="0 0 100 24"><rect x="8.1" y="3.5" width="2.7" height="11" rx="1.35" fill="#a0a0a0"/><rect x="11.7" y="2.6" width="2.7" height="11" rx="1.35" fill="#a0a0a0"/><rect x="15" y="3.3" width="2.7" height="11" rx="1.35" fill="#a0a0a0"/><rect x="18.5" y="5.8" width="2.7" height="9" rx="1.35" fill="#a0a0a0"/><path d="M7.5 11.5 H21.2 V14.5 A7.2 6.2 0 0 1 14 20.6 A7 6.2 0 0 1 7.2 16.5Z" fill="#a0a0a0"/><path d="M3.6 10.2 L6 9.4 L10.2 15.5 L8 17.5Z" fill="#a0a0a0"/><path d="M37.9 2.9 L43 7.8 H32.8Z M28.8 13.3 H47 L37.9 20.2Z" fill="#a0a0a0"/><rect x="36.4" y="7.5" width="3" height="6" fill="#a0a0a0"/><path d="M56.5 5.5 A8.5 8.5 0 1 0 67.6 7" fill="none" stroke="#a0a0a0" stroke-width="2"/><circle cx="67.7" cy="4.9" r="2.5" fill="#a0a0a0"/><circle cx="63" cy="11.6" r="2.6" fill="#a0a0a0"/><rect x="80" y="3.8" width="16" height="15.6" rx="2" fill="none" stroke="#a0a0a0" stroke-width="1.9"/><path d="M80 9.5 H89.8 V19.5" fill="none" stroke="#a0a0a0" stroke-width="1.9"/></svg><svg style="left:907px;top:106px;" width="100" height="24" viewBox="0 0 100 24"><rect x="8.1" y="3.5" width="2.7" height="11" rx="1.35" fill="#a0a0a0"/><rect x="11.7" y="2.6" width="2.7" height="11" rx="1.35" fill="#a0a0a0"/><rect x="15" y="3.3" width="2.7" height="11" rx="1.35" fill="#a0a0a0"/><rect x="18.5" y="5.8" width="2.7" height="9" rx="1.35" fill="#a0a0a0"/><path d="M7.5 11.5 H21.2 V14.5 A7.2 6.2 0 0 1 14 20.6 A7 6.2 0 0 1 7.2 16.5Z" fill="#a0a0a0"/><path d="M3.6 10.2 L6 9.4 L10.2 15.5 L8 17.5Z" fill="#a0a0a0"/><path d="M37.9 2.9 L43 7.8 H32.8Z M28.8 13.3 H47 L37.9 20.2Z" fill="#a0a0a0"/><rect x="36.4" y="7.5" width="3" height="6" fill="#a0a0a0"/><path d="M56.5 5.5 A8.5 8.5 0 1 0 67.6 7" fill="none" stroke="#a0a0a0" stroke-width="2"/><circle cx="67.7" cy="4.9" r="2.5" fill="#a0a0a0"/><circle cx="63" cy="11.6" r="2.6" fill="#a0a0a0"/><rect x="80" y="3.8" width="16" height="15.6" rx="2" fill="none" stroke="#a0a0a0" stroke-width="1.9"/><path d="M80 9.5 H89.8 V19.5" fill="none" stroke="#a0a0a0" stroke-width="1.9"/></svg><svg style="left:426px;top:472px;" width="100" height="24" viewBox="0 0 100 24"><rect x="8.1" y="3.5" width="2.7" height="11" rx="1.35" fill="#a0a0a0"/><rect x="11.7" y="2.6" width="2.7" height="11" rx="1.35" fill="#a0a0a0"/><rect x="15" y="3.3" width="2.7" height="11" rx="1.35" fill="#a0a0a0"/><rect x="18.5" y="5.8" width="2.7" height="9" rx="1.35" fill="#a0a0a0"/><path d="M7.5 11.5 H21.2 V14.5 A7.2 6.2 0 0 1 14 20.6 A7 6.2 0 0 1 7.2 16.5Z" fill="#a0a0a0"/><path d="M3.6 10.2 L6 9.4 L10.2 15.5 L8 17.5Z" fill="#a0a0a0"/><path d="M37.9 2.9 L43 7.8 H32.8Z M28.8 13.3 H47 L37.9 20.2Z" fill="#a0a0a0"/><rect x="36.4" y="7.5" width="3" height="6" fill="#a0a0a0"/><path d="M56.5 5.5 A8.5 8.5 0 1 0 67.6 7" fill="none" stroke="#a0a0a0" stroke-width="2"/><circle cx="67.7" cy="4.9" r="2.5" fill="#a0a0a0"/><circle cx="63" cy="11.6" r="2.6" fill="#a0a0a0"/><rect x="80" y="3.8" width="16" height="15.6" rx="2" fill="none" stroke="#a0a0a0" stroke-width="1.9"/><path d="M80 9.5 H89.8 V19.5" fill="none" stroke="#a0a0a0" stroke-width="1.9"/></svg><svg style="left:907px;top:472px;" width="100" height="24" viewBox="0 0 100 24"><rect x="8.1" y="3.5" width="2.7" height="11" rx="1.35" fill="#a0a0a0"/><rect x="11.7" y="2.6" width="2.7" height="11" rx="1.35" fill="#a0a0a0"/><rect x="15" y="3.3" width="2.7" height="11" rx="1.35" fill="#a0a0a0"/><rect x="18.5" y="5.8" width="2.7" height="9" rx="1.35" fill="#a0a0a0"/><path d="M7.5 11.5 H21.2 V14.5 A7.2 6.2 0 0 1 14 20.6 A7 6.2 0 0 1 7.2 16.5Z" fill="#a0a0a0"/><path d="M3.6 10.2 L6 9.4 L10.2 15.5 L8 17.5Z" fill="#a0a0a0"/><path d="M37.9 2.9 L43 7.8 H32.8Z M28.8 13.3 H47 L37.9 20.2Z" fill="#a0a0a0"/><rect x="36.4" y="7.5" width="3" height="6" fill="#a0a0a0"/><path d="M56.5 5.5 A8.5 8.5 0 1 0 67.6 7" fill="none" stroke="#a0a0a0" stroke-width="2"/><circle cx="67.7" cy="4.9" r="2.5" fill="#a0a0a0"/><circle cx="63" cy="11.6" r="2.6" fill="#a0a0a0"/><rect x="80" y="3.8" width="16" height="15.6" rx="2" fill="none" stroke="#a0a0a0" stroke-width="1.9"/><path d="M80 9.5 H89.8 V19.5" fill="none" stroke="#a0a0a0" stroke-width="1.9"/></svg><svg style="left:53px;top:110px;" width="20" height="16" viewBox="0 0 20 16"><rect x="1" y="1" width="18" height="2.2" fill="#c0c0c0"/><rect x="1" y="6.5" width="18" height="2.2" fill="#c0c0c0"/><rect x="1" y="12" width="18" height="2.2" fill="#c0c0c0"/></svg><div style="left:50px;top:135px;width:32px;height:18px;background:rgba(70,70,70,0.55);border-radius:3px;"></div><div style="left:50px;top:170px;width:116px;height:47px;background:rgba(70,70,70,0.55);border-radius:3px;"></div><div style="left:50px;top:234px;width:93px;height:18px;background:rgba(70,70,70,0.55);border-radius:3px;"></div><div style="left:125px;top:237px;width:11px;height:12px;background:none;border-radius:0px;border:1px dashed #8a5a30;box-sizing:border-box;"></div><svg style="left:125px;top:237px;" width="11" height="12" viewBox="0 0 11 12"><path d="M4 3.5 L7.5 6 L4 8.5Z" fill="#d8d8d8"/></svg><div style="left:232px;top:136px;width:105px;height:17px;background:rgba(70,70,70,0.55);border-radius:3px;"></div><svg style="left:319px;top:138px;" width="12" height="12" viewBox="0 0 12 12"><path d="M2 10 V5 A3.5 3.5 0 0 1 9 5 V6 M1 10 H11" fill="none" stroke="#a0a0c0" stroke-width="1.3"/></svg><div style="left:50px;top:443px;width:105px;height:20px;background:rgba(70,70,70,0.55);border-radius:3px;"></div><div style="left:380px;top:443px;width:141px;height:20px;background:rgba(70,70,70,0.55);border-radius:3px;"></div><div style="left:535px;top:136px;width:30px;height:16px;background:rgba(70,70,70,0.55);border-radius:3px;"></div><div style="left:877px;top:444px;width:124px;height:18px;background:rgba(70,70,70,0.55);border-radius:3px;"></div><div style="left:50px;top:502px;width:32px;height:17px;background:rgba(70,70,70,0.55);border-radius:3px;"></div><div style="left:395px;top:811px;width:125px;height:18px;background:rgba(70,70,70,0.55);border-radius:3px;"></div><div style="left:533px;top:502px;width:31px;height:17px;background:rgba(70,70,70,0.55);border-radius:3px;"></div><div style="left:877px;top:811px;width:125px;height:18px;background:rgba(70,70,70,0.55);border-radius:3px;"></div><div style="left:1012px;top:203px;width:44px;height:1px;background:#303030;border-radius:0px;"></div><div style="left:1012px;top:248px;width:44px;height:1px;background:#303030;border-radius:0px;"></div><div style="left:1012px;top:351px;width:44px;height:1px;background:#303030;border-radius:0px;"></div><div style="left:1012px;top:446px;width:44px;height:1px;background:#303030;border-radius:0px;"></div><div style="left:1012px;top:599px;width:44px;height:1px;background:#303030;border-radius:0px;"></div><div style="left:1012px;top:643px;width:44px;height:1px;background:#303030;border-radius:0px;"></div><div style="left:1012px;top:688px;width:44px;height:1px;background:#303030;border-radius:0px;"></div><svg style="left:1049px;top:196px;" width="7" height="7" viewBox="0 0 7 7"><path d="M7 0 L7 7 L0 7Z" fill="#8a8a8a"/></svg><svg style="left:1049px;top:241px;" width="7" height="7" viewBox="0 0 7 7"><path d="M7 0 L7 7 L0 7Z" fill="#8a8a8a"/></svg><svg style="left:1049px;top:286px;" width="7" height="7" viewBox="0 0 7 7"><path d="M7 0 L7 7 L0 7Z" fill="#8a8a8a"/></svg><svg style="left:1049px;top:344px;" width="7" height="7" viewBox="0 0 7 7"><path d="M7 0 L7 7 L0 7Z" fill="#8a8a8a"/></svg><svg style="left:1049px;top:389px;" width="7" height="7" viewBox="0 0 7 7"><path d="M7 0 L7 7 L0 7Z" fill="#8a8a8a"/></svg><svg style="left:1049px;top:439px;" width="7" height="7" viewBox="0 0 7 7"><path d="M7 0 L7 7 L0 7Z" fill="#8a8a8a"/></svg><svg style="left:1049px;top:484px;" width="7" height="7" viewBox="0 0 7 7"><path d="M7 0 L7 7 L0 7Z" fill="#8a8a8a"/></svg><svg style="left:1049px;top:534px;" width="7" height="7" viewBox="0 0 7 7"><path d="M7 0 L7 7 L0 7Z" fill="#8a8a8a"/></svg><svg style="left:1049px;top:592px;" width="7" height="7" viewBox="0 0 7 7"><path d="M7 0 L7 7 L0 7Z" fill="#8a8a8a"/></svg><svg style="left:1049px;top:636px;" width="7" height="7" viewBox="0 0 7 7"><path d="M7 0 L7 7 L0 7Z" fill="#8a8a8a"/></svg><svg style="left:1049px;top:681px;" width="7" height="7" viewBox="0 0 7 7"><path d="M7 0 L7 7 L0 7Z" fill="#8a8a8a"/></svg><svg style="left:1049px;top:726px;" width="7" height="7" viewBox="0 0 7 7"><path d="M7 0 L7 7 L0 7Z" fill="#8a8a8a"/></svg><svg style="left:1049px;top:797px;" width="7" height="7" viewBox="0 0 7 7"><path d="M7 0 L7 7 L0 7Z" fill="#8a8a8a"/></svg><svg style="left:1012px;top:101px;" width="44" height="45" viewBox="0 0 44 45"><path d="M12 14 V32 H35 M8 18 L12 13.5 L16 18 M31 28 L35.5 32 L31 36" fill="none" stroke="#c8ccf4" stroke-width="2.2"/><circle cx="28.5" cy="16.5" r="7.5" fill="#c8ccf4"/></svg><svg style="left:1012px;top:159px;" width="44" height="44" viewBox="0 0 44 44"><rect x="10" y="10.5" width="24" height="23.5" fill="none" stroke="#80d4f6" stroke-width="2.6"/></svg><svg style="left:1012px;top:203px;" width="44" height="45" viewBox="0 0 44 45"><path d="M22 9 L34 15.5 V29.5 L22 36 L10 29.5 V15.5Z" fill="#80d4f6"/><path d="M10 15.5 L22 22 L34 15.5 M22 22 V36" fill="none" stroke="#3a3a3a" stroke-width="1.6"/></svg><svg style="left:1012px;top:248px;" width="44" height="45" viewBox="0 0 44 45"><path d="M10 15 V9 H34 V15 M22 9 V37 M15 37 H29" fill="none" stroke="#80d4f6" stroke-width="2.6"/></svg><svg style="left:1012px;top:307px;" width="44" height="44" viewBox="0 0 44 44"><circle cx="22" cy="22" r="9" fill="#5ad67a"/><circle cx="22" cy="22" r="13" fill="none" stroke="#e8e8e8" stroke-width="1.2" stroke-dasharray="3 3"/><rect x="30.8" y="26.0" width="5" height="5" fill="#3a3a3a" stroke="#e8e8e8" stroke-width="1.2"/><rect x="19.5" y="32.5" width="5" height="5" fill="#3a3a3a" stroke="#e8e8e8" stroke-width="1.2"/><rect x="8.2" y="26.0" width="5" height="5" fill="#3a3a3a" stroke="#e8e8e8" stroke-width="1.2"/><rect x="8.2" y="13.0" width="5" height="5" fill="#3a3a3a" stroke="#e8e8e8" stroke-width="1.2"/><rect x="19.5" y="6.5" width="5" height="5" fill="#3a3a3a" stroke="#e8e8e8" stroke-width="1.2"/><rect x="30.8" y="13.0" width="5" height="5" fill="#3a3a3a" stroke="#e8e8e8" stroke-width="1.2"/></svg><svg style="left:1012px;top:351px;" width="44" height="45" viewBox="0 0 44 45"><path d="M22 8 L35 15 L22 22 L9 15Z" fill="#5ad67a"/><path d="M9 17.5 L20.8 24 V37.5 L9 31Z M35 17.5 L23.2 24 V37.5 L35 31Z" fill="#5ad67a"/></svg><svg style="left:1012px;top:402px;" width="44" height="44" viewBox="0 0 44 44"><path d="M10.5 13.5 L19.5 7.5 Q31 13 34 28.5 L24.5 35.5 L15 29.5 Q15.5 25 10.5 22Z" fill="none" stroke="#a09cf4" stroke-width="2.2" stroke-linejoin="round"/><path d="M14 15.5 Q22 20 24.5 30.5" fill="none" stroke="#a09cf4" stroke-width="1.6"/></svg><svg style="left:1012px;top:446px;" width="44" height="45" viewBox="0 0 44 45"><path d="M11 12 V33 H32" fill="none" stroke="#a09cf4" stroke-width="2.4"/><path d="M11 6 L15 12.5 H7Z M37.5 33 L31 29 V37Z" fill="#a09cf4"/><path d="M28 9.5 L34.5 13.2 V20.8 L28 24.5 L21.5 20.8 V13.2Z M21.5 13.2 L28 17 L34.5 13.2 M28 17 V24.5" fill="none" stroke="#a09cf4" stroke-width="1.4"/></svg><svg style="left:1012px;top:497px;" width="44" height="44" viewBox="0 0 44 44"><path d="M10 14.5 L21.5 21 V36.5 L10 30Z M22.5 7.5 L34.5 14 V29.5 L22.5 23Z" fill="none" stroke="#eea6f0" stroke-width="2.3" stroke-linejoin="miter"/><path d="M16 25.5 L28 18.5" stroke="#eea6f0" stroke-width="1.6"/></svg><svg style="left:1012px;top:554px;" width="44" height="45" viewBox="0 0 44 45"><circle cx="21" cy="21" r="13" fill="none" stroke="#c8ccf4" stroke-width="2"/><ellipse cx="21" cy="21" rx="6" ry="13" fill="none" stroke="#c8ccf4" stroke-width="1.8"/><path d="M8 21 H34 M10 14 H32 M10 28 H32" stroke="#c8ccf4" stroke-width="1.6"/><rect x="25" y="27" width="14" height="11" rx="2" fill="#111"/><text x="32" y="36" font-size="9" font-weight="bold" text-anchor="middle" fill="#fff" font-family="Liberation Sans">ST</text></svg><svg style="left:1012px;top:599px;" width="44" height="44" viewBox="0 0 44 44"><rect x="10" y="17" width="24" height="17" fill="none" stroke="#c8ccf4" stroke-width="2.4"/><path d="M9 10 H35 V17 H9Z" fill="#c8ccf4"/><path d="M14 10 L17 17 M20 10 L23 17 M26 10 L29 17" stroke="#3a3a3a" stroke-width="2"/></svg><svg style="left:1012px;top:643px;" width="44" height="45" viewBox="0 0 44 45"><path d="M10 20 H30 V33 H10Z M15 20 V12 H27 V20" fill="none" stroke="#c8ccf4" stroke-width="2.4"/><path d="M30 24 L36 20 V33 L30 29Z" fill="#c8ccf4"/><rect x="25" y="29" width="14" height="11" rx="2" fill="#111"/><text x="32" y="38" font-size="9" font-weight="bold" text-anchor="middle" fill="#fff" font-family="Liberation Sans">ST</text></svg><svg style="left:1012px;top:688px;" width="44" height="45" viewBox="0 0 44 45"><path d="M14 24 A8 8 0 1 1 28 24 L26 28 H16Z" fill="none" stroke="#e8e8e8" stroke-width="2"/><path d="M17 31 H25 M18 34 H24" stroke="#e8e8e8" stroke-width="1.6"/><path d="M21 6 V10 M9 12 L12 14.5 M33 12 L30 14.5 M6 21 H10 M32 21 H36" stroke="#e8e8e8" stroke-width="2"/><rect x="26" y="28" width="14" height="11" rx="2" fill="#111"/><text x="33" y="37" font-size="9" font-weight="bold" text-anchor="middle" fill="#fff" font-family="Liberation Sans">ST</text></svg><svg style="left:1012px;top:748px;" width="44" height="56" viewBox="0 0 44 56"><path d="M22 12 L34 19 V33 L22 40 L10 33 V19Z" fill="none" stroke="#4a4a4a" stroke-width="2"/><path d="M17 34 L30 20 L33 23 L20 37 L16 38Z" fill="#4a4a4a"/></svg><svg style="left:1066px;top:103px;" width="18" height="14" viewBox="0 0 18 14"><rect x="0" y="0" width="18" height="2.4" fill="#a6a6a6"/><rect x="0" y="5.5" width="18" height="2.4" fill="#a6a6a6"/><rect x="0" y="11" width="18" height="2.4" fill="#a6a6a6"/></svg><svg style="left:1318px;top:99.5px;" width="124" height="20" viewBox="0 0 124 20"><path d="M4 5 L9 10 L4 15" fill="none" stroke="#a6a6a6" stroke-width="1.6"/><circle cx="34" cy="8" r="6" fill="none" stroke="#a6a6a6" stroke-width="2"/><path d="M38.5 12.5 L44 18" stroke="#a6a6a6" stroke-width="2.2"/><path d="M53 18 V9 L61.5 2 L70 9 V18 H65 V12 H58 V18Z" fill="none" stroke="#a6a6a6" stroke-width="1.9"/><path d="M79 4 H101 M83 9.5 H97 M87 15 H93" stroke="#a6a6a6" stroke-width="2.2"/><path d="M112 2 H105 V19 H122 V12 M114 10 L122 2 M116 2 H122 V8" fill="none" stroke="#a6a6a6" stroke-width="1.9"/></svg><svg style="left:1066px;top:126px;" width="160" height="22" viewBox="0 0 160 22"><path d="M2 0 V13 H15" fill="none" stroke="#555" stroke-width="1"/><g transform="translate(14.5,4.5) scale(0.8)"><path d="M8.7 3.2 C0 6 0 9 7 11 L17 14.5 C23 16.5 22 18 15.3 18.5" fill="none" stroke="#7cc8ec" stroke-width="2"/><circle cx="12" cy="2.6" r="2.6" fill="#fff"/><circle cx="12" cy="19.3" r="2.6" fill="#fff"/></g><rect x="102.5" y="5" width="13" height="13" rx="2" fill="#5a5a5a"/><path d="M106 15 L113 8" stroke="#222" stroke-width="2"/><circle cx="127" cy="6" r="3.8" fill="#5e5e5e"/><circle cx="127" cy="16" r="3.8" fill="#5e5e5e"/><path d="M136 11 L140 15.5 L150 5.5" fill="none" stroke="#4cd36c" stroke-width="2.6"/></svg><svg style="left:1066px;top:392px;" width="18" height="14" viewBox="0 0 18 14"><rect x="0" y="0" width="18" height="2.4" fill="#a6a6a6"/><rect x="0" y="5.5" width="18" height="2.4" fill="#a6a6a6"/><rect x="0" y="11" width="18" height="2.4" fill="#a6a6a6"/></svg><svg style="left:1186px;top:391px;" width="250" height="22" viewBox="0 0 250 22"><path d="M4 5 L9 10 L4 15" fill="none" stroke="#a6a6a6" stroke-width="1.6"/><path d="M60 10 H77 M67 3 L60 10 L67 17" fill="none" stroke="#a6a6a6" stroke-width="2"/><path d="M84 10 H101 M94 3 L101 10 L94 17" fill="none" stroke="#5a5a5a" stroke-width="2"/><path d="M119 19 V3 M112 10 L119 3 L126 10" fill="none" stroke="#a6a6a6" stroke-width="2"/><circle cx="141" cy="8" r="6" fill="none" stroke="#a6a6a6" stroke-width="2"/><path d="M145.5 12.5 L151 18" stroke="#a6a6a6" stroke-width="2.2"/><path d="M158 4 H179 M162 10 H175 M166 16 H171" stroke="#a6a6a6" stroke-width="2.2"/><rect x="187" y="9" width="13" height="11" rx="1.5" fill="none" stroke="#a6a6a6" stroke-width="1.9"/><path d="M189.5 9 V5.5 A4 4 0 0 1 197.5 5.5 V6" fill="none" stroke="#a6a6a6" stroke-width="1.9"/><circle cx="193.5" cy="14.5" r="1.4" fill="#a6a6a6"/><circle cx="218" cy="10" r="9" fill="none" stroke="#a6a6a6" stroke-width="1.9"/><circle cx="218" cy="10" r="3.5" fill="none" stroke="#a6a6a6" stroke-width="1.9"/><path d="M240 2 H233 V19 H250 V12 M242 10 L250 2 M244 2 H250 V8" fill="none" stroke="#a6a6a6" stroke-width="1.9"/></svg><div style="left:1058px;top:415px;width:385px;height:1px;background:#232323;border-radius:0px;"></div><svg style="left:1068px;top:422px;" width="24" height="24" viewBox="0 0 24 24"><path d="M8.7 3.2 C0 6 0 9 7 11 L17 14.5 C23 16.5 22 18 15.3 18.5" fill="none" stroke="#80d0f0" stroke-width="1.9"/><circle cx="12" cy="2.6" r="2.4" fill="#fff"/><circle cx="12" cy="19.3" r="2.4" fill="#fff"/></svg><div style="left:1291px;top:421px;width:144px;height:23px;background:#333333;border-radius:0px;border-radius:12px 4px 4px 12px;"></div><div style="left:1409px;top:421px;width:1px;height:23px;background:#2a2a2a;border-radius:0px;"></div><svg style="left:1413px;top:428px;" width="16" height="10" viewBox="0 0 16 10"><path d="M2 2 H14 L8 8Z" fill="#c8c8c8"/></svg><div style="left:1069px;top:451.5px;width:50px;height:23.5px;background:#383838;border-radius:4px;"></div><div style="left:1124px;top:451.5px;width:50px;height:23.5px;background:#383838;border-radius:4px;"></div><div style="left:1179px;top:451.5px;width:82px;height:23.5px;background:#5b5ea6;border-radius:4px;"></div><div style="left:1425px;top:480px;width:4px;height:146px;background:#3e3e3e;border-radius:2px;"></div><svg style="left:1070px;top:515px;" width="14" height="14" viewBox="0 0 14 14"><path d="M7 1.5 L12.5 7 L7 12.5 L1.5 7Z" fill="none" stroke="#c0c0c0" stroke-width="1.5"/></svg><svg style="left:1070px;top:540px;" width="14" height="14" viewBox="0 0 14 14"><path d="M7 1.5 L12.5 7 L7 12.5 L1.5 7Z" fill="none" stroke="#c0c0c0" stroke-width="1.5"/></svg><svg style="left:1070px;top:565px;" width="14" height="14" viewBox="0 0 14 14"><path d="M7 1.5 L12.5 7 L7 12.5 L1.5 7Z" fill="none" stroke="#c0c0c0" stroke-width="1.5"/></svg><svg style="left:1070px;top:591px;" width="14" height="14" viewBox="0 0 14 14"><path d="M7 1.5 L12.5 7 L7 12.5 L1.5 7Z" fill="none" stroke="#555" stroke-width="1.5"/></svg><svg style="left:1070px;top:619px;" width="14" height="14" viewBox="0 0 14 14"><path d="M7 1.5 L12.5 7 L7 12.5 L1.5 7Z" fill="none" stroke="#c0c0c0" stroke-width="1.5"/></svg><div style="left:1197px;top:511px;width:219px;height:23px;background:#363636;border-radius:4px;"></div><svg style="left:1396px;top:518px;" width="14" height="8" viewBox="0 0 14 8"><path d="M1 1 H13 L7 7Z" fill="#c8c8c8"/></svg><div style="left:1197px;top:538px;width:17px;height:17px;background:#5b5ea6;border-radius:3px;"></div><svg style="left:1197px;top:538px;" width="17" height="17" viewBox="0 0 17 17"><path d="M4 8.5 L7.5 12 L13.5 5" fill="none" stroke="#fff" stroke-width="2"/></svg><div style="left:1197px;top:561px;width:219px;height:23px;background:#363636;border-radius:4px;"></div><svg style="left:1396px;top:568px;" width="14" height="8" viewBox="0 0 14 8"><path d="M1 1 H13 L7 7Z" fill="#c8c8c8"/></svg><div style="left:1197px;top:587px;width:93px;height:23px;background:#262626;border-radius:4px;"></div><div style="left:1197px;top:615px;width:93px;height:22px;background:#1c1c1c;border-radius:4px;"></div><div style="left:1058px;top:646px;width:385px;height:1px;background:#222222;border-radius:0px;"></div><svg style="left:1066px;top:658px;" width="18" height="14" viewBox="0 0 18 14"><rect x="0" y="0" width="18" height="2.4" fill="#e8e8e8"/><rect x="0" y="5.5" width="18" height="2.4" fill="#e8e8e8"/><rect x="0" y="11" width="18" height="2.4" fill="#e8e8e8"/></svg><svg style="left:1172px;top:653px;" width="24" height="24" viewBox="0 0 24 24"><circle cx="12" cy="12" r="11.5" fill="#333"/></svg><div style="left:1206px;top:653px;width:137px;height:23px;background:#383838;border-radius:4px;"></div><svg style="left:1323px;top:661px;" width="14" height="8" viewBox="0 0 14 8"><path d="M1 1 H13 L7 7Z" fill="#c8c8c8"/></svg><div style="left:1348px;top:653px;width:86px;height:23px;background:#2e2e2e;border-radius:4px;"></div><svg style="left:1414px;top:661px;" width="14" height="8" viewBox="0 0 14 8"><path d="M1 1 H13 L7 7Z" fill="#555"/></svg><div style="left:1082.4px;top:687px;width:112.59999999999991px;height:22.5px;background:#1c1c1c;border-radius:4px;"></div><div style="left:1202.6px;top:687px;width:112.80000000000018px;height:22.5px;background:#1c1c1c;border-radius:4px;"></div><div style="left:1322px;top:687px;width:113px;height:22.5px;background:#1c1c1c;border-radius:4px;"></div><div style="left:1082.4px;top:714px;width:112.59999999999991px;height:22.5px;background:#1c1c1c;border-radius:4px;"></div><div style="left:1202.6px;top:714px;width:112.80000000000018px;height:22.5px;background:#1c1c1c;border-radius:4px;"></div><div style="left:1322px;top:714px;width:113px;height:22.5px;background:#1c1c1c;border-radius:4px;"></div><div style="left:1082.4px;top:742px;width:112.59999999999991px;height:22.5px;background:#1c1c1c;border-radius:4px;"></div><div style="left:1202.6px;top:742px;width:112.80000000000018px;height:22.5px;background:#1c1c1c;border-radius:4px;"></div><div style="left:1322px;top:742px;width:113px;height:22.5px;background:#1c1c1c;border-radius:4px;"></div><div style="left:1322px;top:686.5px;width:113px;height:23.5px;background:none;border-radius:4px;border:1.5px solid #6a6ccc;box-sizing:border-box;"></div><svg style="left:1326px;top:692px;" width="8" height="12" viewBox="0 0 8 12"><path d="M7 1 L1 6 L7 11Z" fill="#e8e8e8"/></svg><svg style="left:1423px;top:692px;" width="8" height="12" viewBox="0 0 8 12"><path d="M1 1 L7 6 L1 11Z" fill="#e8e8e8"/></svg><svg style="left:1400px;top:700px;" width="40" height="60" viewBox="0 0 40 60"><path d="M7.1 2.8 L36.6 37.1 L22.8 36.1 L29.5 55.6 L25.2 57.5 L18 38 L7.1 48Z" fill="#ff00dc"/></svg>
<span id="t0" style="left:81px;top:9px;font-size:13.5px;color:#e6e6e6;transform:scaleX(0.986);transform-origin:0 0;">名称未設定 1 *</span><span id="t1" style="left:9px;top:40.5px;font-size:14.5px;color:#c8c8c8;transform:scaleX(0.650);transform-origin:0 0;">ファイル</span><span id="t2" style="left:66.5px;top:40.5px;font-size:14.5px;color:#c8c8c8;transform:scaleX(0.917);transform-origin:0 0;">編集</span><span id="t3" style="left:112px;top:40.5px;font-size:14.5px;color:#c8c8c8;transform:scaleX(0.900);transform-origin:0 0;">作成</span><span id="t4" style="left:156px;top:40.5px;font-size:14.5px;color:#c8c8c8;transform:scaleX(0.667);transform-origin:0 0;">モード</span><span id="t5" style="left:204px;top:40.5px;font-size:14.5px;color:#c8c8c8;transform:scaleX(0.900);transform-origin:0 0;">選択</span><span id="t6" style="left:249px;top:40.5px;font-size:14.5px;color:#c8c8c8;transform:scaleX(0.689);transform-origin:0 0;">ツール</span><span id="t7" style="left:297px;top:40.5px;font-size:14.5px;color:#c8c8c8;transform:scaleX(0.680);transform-origin:0 0;">スプライン</span><span id="t8" style="left:366px;top:40.5px;font-size:14.5px;color:#c8c8c8;transform:scaleX(0.667);transform-origin:0 0;">メッシュ</span><span id="t9" style="left:423px;top:40.5px;font-size:14.5px;color:#c8c8c8;transform:scaleX(0.943);transform-origin:0 0;">MoGraph</span><span id="t10" style="left:498px;top:40.5px;font-size:14.5px;color:#c8c8c8;transform:scaleX(0.657);transform-origin:0 0;">アニメーション</span><span id="t11" style="left:585.5px;top:40.5px;font-size:14.5px;color:#c8c8c8;transform:scaleX(0.678);transform-origin:0 0;">レンダリング</span><span id="t12" style="left:664.5px;top:40.5px;font-size:14.5px;color:#c8c8c8;transform:scaleX(0.908);transform-origin:0 0;">機能拡張</span><span id="t13" style="left:736.5px;top:40.5px;font-size:14.5px;color:#c8c8c8;transform:scaleX(0.660);transform-origin:0 0;">ウインドウ</span><span id="t14" style="left:804px;top:40.5px;font-size:14.5px;color:#c8c8c8;transform:scaleX(0.733);transform-origin:0 0;">ヘルプ</span><span id="t15" style="left:1229px;top:9px;font-size:13.5px;color:#e0e0e0;transform:scaleX(1.036);transform-origin:0 0;font-style:italic;">初期</span><span id="t16" style="left:1306px;top:10px;font-size:13.5px;color:#b0b0b0;transform:scaleX(1.004);transform-origin:0 0;">Standard</span><span id="t17" style="left:84px;top:110px;font-size:14px;color:#c8c8c8;transform:scaleX(0.631);transform-origin:0 0;">ビュー</span><span id="t18" style="left:129px;top:110px;font-size:14px;color:#c8c8c8;transform:scaleX(0.702);transform-origin:0 0;">カメラ</span><span id="t19" style="left:177px;top:110px;font-size:14px;color:#c8c8c8;transform:scaleX(0.946);transform-origin:0 0;">表示</span><span id="t20" style="left:222px;top:110px;font-size:14px;color:#c8c8c8;transform:scaleX(0.707);transform-origin:0 0;">オプション</span><span id="t21" style="left:289px;top:110px;font-size:14px;color:#c8c8c8;transform:scaleX(0.696);transform-origin:0 0;">フィルタ</span><span id="t22" style="left:347px;top:110px;font-size:14px;color:#c8c8c8;transform:scaleX(0.774);transform-origin:0 0;">パネル</span><span id="t23" style="left:539px;top:110px;font-size:14px;color:#c8c8c8;transform:scaleX(0.643);transform-origin:0 0;">ビュー</span><span id="t24" style="left:584px;top:110px;font-size:14px;color:#c8c8c8;transform:scaleX(0.714);transform-origin:0 0;">カメラ</span><span id="t25" style="left:632px;top:110px;font-size:14px;color:#c8c8c8;transform:scaleX(0.964);transform-origin:0 0;">表示</span><span id="t26" style="left:676.5px;top:110px;font-size:14px;color:#c8c8c8;transform:scaleX(0.707);transform-origin:0 0;">オプション</span><span id="t27" style="left:743.8px;top:110px;font-size:14px;color:#c8c8c8;transform:scaleX(0.705);transform-origin:0 0;">フィルタ</span><span id="t28" style="left:801.7px;top:110px;font-size:14px;color:#c8c8c8;transform:scaleX(0.793);transform-origin:0 0;">パネル</span><span id="t29" style="left:56px;top:475px;font-size:14px;color:#c8c8c8;transform:scaleX(0.652);transform-origin:0 0;">ビュー</span><span id="t30" style="left:101px;top:475px;font-size:14px;color:#c8c8c8;transform:scaleX(0.729);transform-origin:0 0;">カメラ</span><span id="t31" style="left:149.6px;top:475px;font-size:14px;color:#c8c8c8;transform:scaleX(0.961);transform-origin:0 0;">表示</span><span id="t32" style="left:194.6px;top:475px;font-size:14px;color:#c8c8c8;transform:scaleX(0.706);transform-origin:0 0;">オプション</span><span id="t33" style="left:261.7px;top:475px;font-size:14px;color:#c8c8c8;transform:scaleX(0.702);transform-origin:0 0;">フィルタ</span><span id="t34" style="left:320px;top:475px;font-size:14px;color:#c8c8c8;transform:scaleX(0.786);transform-origin:0 0;">パネル</span><span id="t35" style="left:539px;top:475px;font-size:14px;color:#c8c8c8;transform:scaleX(0.643);transform-origin:0 0;">ビュー</span><span id="t36" style="left:584px;top:475px;font-size:14px;color:#c8c8c8;transform:scaleX(0.714);transform-origin:0 0;">カメラ</span><span id="t37" style="left:631.6px;top:475px;font-size:14px;color:#c8c8c8;transform:scaleX(0.979);transform-origin:0 0;">表示</span><span id="t38" style="left:676.6px;top:475px;font-size:14px;color:#c8c8c8;transform:scaleX(0.706);transform-origin:0 0;">オプション</span><span id="t39" style="left:743.7px;top:475px;font-size:14px;color:#c8c8c8;transform:scaleX(0.702);transform-origin:0 0;">フィルタ</span><span id="t40" style="left:801px;top:475px;font-size:14px;color:#c8c8c8;transform:scaleX(0.810);transform-origin:0 0;">パネル</span><span id="t41" style="left:1073px;top:75px;font-size:13.5px;color:#e6e6e6;transform:scaleX(0.702);transform-origin:0 0;">オブジェクト</span><span id="t42" style="left:1163px;top:75px;font-size:13.5px;color:#a8a8a8;transform:scaleX(0.714);transform-origin:0 0;">テイク</span><span id="t43" style="left:1096.7px;top:102px;font-size:14px;color:#c8c8c8;transform:scaleX(0.680);transform-origin:0 0;">ファイル</span><span id="t44" style="left:1154.5px;top:102px;font-size:14px;color:#c8c8c8;transform:scaleX(0.939);transform-origin:0 0;">編集</span><span id="t45" style="left:1199px;top:102px;font-size:14px;color:#c8c8c8;transform:scaleX(0.964);transform-origin:0 0;">表示</span><span id="t46" style="left:1244px;top:102px;font-size:14px;color:#c8c8c8;transform:scaleX(0.702);transform-origin:0 0;">オブジェクト</span><span id="t47" style="left:1104.7px;top:130.5px;font-size:14px;color:#f2b32e;transform:scaleX(0.950);transform-origin:0 0;">長方形.1</span><span id="t48" style="left:1073px;top:366px;font-size:13.5px;color:#e6e6e6;transform:scaleX(1.000);transform-origin:0 0;">属性</span><span id="t49" style="left:549px;top:859px;font-size:12.5px;color:#d8d8d8;">0 F</span><span id="t50" style="left:80px;top:886px;font-size:14px;color:#8e90d8;transform:scaleX(0.962);transform-origin:0 0;">0</span><span id="t51" style="left:120.85px;top:886px;font-size:14px;color:#c8c8c8;transform:scaleX(0.898);transform-origin:0 0;">5</span><span id="t52" style="left:168.35px;top:886px;font-size:14px;color:#c8c8c8;transform:scaleX(0.905);transform-origin:0 0;">10</span><span id="t53" style="left:219.39999999999998px;top:886px;font-size:14px;color:#c8c8c8;transform:scaleX(0.905);transform-origin:0 0;">15</span><span id="t54" style="left:270.45px;top:886px;font-size:14px;color:#c8c8c8;transform:scaleX(0.905);transform-origin:0 0;">20</span><span id="t55" style="left:321.5px;top:886px;font-size:14px;color:#c8c8c8;transform:scaleX(0.905);transform-origin:0 0;">25</span><span id="t56" style="left:372.55px;top:886px;font-size:14px;color:#c8c8c8;transform:scaleX(0.905);transform-origin:0 0;">30</span><span id="t57" style="left:423.6px;top:886px;font-size:14px;color:#c8c8c8;transform:scaleX(0.905);transform-origin:0 0;">35</span><span id="t58" style="left:474.65000000000003px;top:886px;font-size:14px;color:#c8c8c8;transform:scaleX(0.905);transform-origin:0 0;">40</span><span id="t59" style="left:525.7px;top:886px;font-size:14px;color:#c8c8c8;transform:scaleX(0.905);transform-origin:0 0;">45</span><span id="t60" style="left:576.7500000000001px;top:886px;font-size:14px;color:#c8c8c8;transform:scaleX(0.905);transform-origin:0 0;">50</span><span id="t61" style="left:627.8000000000001px;top:886px;font-size:14px;color:#c8c8c8;transform:scaleX(0.905);transform-origin:0 0;">55</span><span id="t62" style="left:678.85px;top:886px;font-size:14px;color:#c8c8c8;transform:scaleX(0.905);transform-origin:0 0;">60</span><span id="t63" style="left:729.9000000000001px;top:886px;font-size:14px;color:#c8c8c8;transform:scaleX(0.905);transform-origin:0 0;">65</span><span id="t64" style="left:780.95px;top:886px;font-size:14px;color:#c8c8c8;transform:scaleX(0.905);transform-origin:0 0;">70</span><span id="t65" style="left:832.0000000000001px;top:886px;font-size:14px;color:#c8c8c8;transform:scaleX(0.905);transform-origin:0 0;">75</span><span id="t66" style="left:883.0500000000001px;top:886px;font-size:14px;color:#c8c8c8;transform:scaleX(0.905);transform-origin:0 0;">80</span><span id="t67" style="left:934.1px;top:886px;font-size:14px;color:#c8c8c8;transform:scaleX(0.905);transform-origin:0 0;">85</span><span id="t68" style="left:985.1500000000001px;top:886px;font-size:14px;color:#c8c8c8;transform:scaleX(0.905);transform-origin:0 0;">90</span><span id="t69" style="left:93px;top:920px;font-size:12.5px;color:#d8d8d8;">0 F</span><span id="t70" style="left:178px;top:920px;font-size:12.5px;color:#d8d8d8;">0 F</span><span id="t71" style="left:860px;top:920px;font-size:12.5px;color:#d8d8d8;">90 F</span><span id="t72" style="left:948px;top:920px;font-size:12.5px;color:#d8d8d8;">90 F</span><span id="t73" style="left:53px;top:138px;font-size:13px;color:#e0e0e0;transform:scaleX(1.000);transform-origin:0 0;">透視</span><span id="t74" style="left:104px;top:175px;font-size:13px;color:#dcdcdc;transform:scaleX(1.061);transform-origin:0 0;">選択 合計</span><span id="t75" style="left:52.6px;top:198px;font-size:13px;color:#dcdcdc;transform:scaleX(0.760);transform-origin:0 0;">ポイント</span><span id="t76" style="left:103.7px;top:198px;font-size:13px;color:#dcdcdc;">2</span><span id="t77" style="left:136px;top:198px;font-size:13px;color:#dcdcdc;">8</span><span id="t78" style="left:53px;top:237px;font-size:13px;color:#dcdcdc;transform:scaleX(1.031);transform-origin:0 0;">長方形選択</span><span id="t79" style="left:235px;top:139px;font-size:13px;color:#dcdcdc;transform:scaleX(0.788);transform-origin:0 0;">デフォルトカメラ</span><span id="t80" style="left:53px;top:447px;font-size:13px;color:#dcdcdc;transform:scaleX(0.797);transform-origin:0 0;">ビューの変換: シーン</span><span id="t81" style="left:383px;top:447px;font-size:13px;color:#dcdcdc;transform:scaleX(0.932);transform-origin:0 0;">グリッド間隔 : 50000 cm</span><span id="t82" style="left:536px;top:139px;font-size:13px;color:#e0e0e0;transform:scaleX(1.000);transform-origin:0 0;">上面</span><span id="t83" style="left:879px;top:447px;font-size:13px;color:#dcdcdc;transform:scaleX(0.942);transform-origin:0 0;">グリッド間隔 : 50 cm</span><span id="t84" style="left:53px;top:505px;font-size:13px;color:#e0e0e0;transform:scaleX(1.000);transform-origin:0 0;">右面</span><span id="t85" style="left:397px;top:814px;font-size:13px;color:#dcdcdc;transform:scaleX(0.942);transform-origin:0 0;">グリッド間隔 : 50 cm</span><span id="t86" style="left:536px;top:505px;font-size:13px;color:#e0e0e0;transform:scaleX(1.000);transform-origin:0 0;">前面</span><span id="t87" style="left:879px;top:814px;font-size:13px;color:#dcdcdc;transform:scaleX(0.942);transform-origin:0 0;">グリッド間隔 : 50 cm</span><span id="t88" style="left:1097px;top:392px;font-size:14px;color:#c8c8c8;transform:scaleX(0.690);transform-origin:0 0;">モード</span><span id="t89" style="left:1144px;top:392px;font-size:14px;color:#c8c8c8;transform:scaleX(0.964);transform-origin:0 0;">編集</span><span id="t90" style="left:1099px;top:425px;font-size:14px;color:#bdbdbd;transform:scaleX(0.835);transform-origin:0 0;">スプライン [長方形.1]</span><span id="t91" style="left:1301px;top:425px;font-size:14px;color:#d0d0d0;transform:scaleX(0.750);transform-origin:0 0;">カスタム</span><span id="t92" style="left:1081px;top:456px;font-size:14px;color:#d0d0d0;transform:scaleX(0.964);transform-origin:0 0;">基本</span><span id="t93" style="left:1136px;top:456px;font-size:14px;color:#d0d0d0;transform:scaleX(0.964);transform-origin:0 0;">座標</span><span id="t94" style="left:1190px;top:456px;font-size:14px;color:#f0f0f0;transform:scaleX(0.702);transform-origin:0 0;">オブジェクト</span><span id="t95" style="left:1069px;top:487px;font-size:14px;color:#f0f0f0;transform:scaleX(0.841);transform-origin:0 0;font-weight:bold;">オブジェクトの属性</span><span id="t96" style="left:1097px;top:515px;font-size:14px;color:#bdbdbd;transform:scaleX(0.690);transform-origin:0 0;">タイプ</span><span id="t97" style="left:1097px;top:540px;font-size:14px;color:#bdbdbd;transform:scaleX(0.738);transform-origin:0 0;">スプラインを閉じる</span><span id="t98" style="left:1097px;top:565px;font-size:14px;color:#bdbdbd;transform:scaleX(0.690);transform-origin:0 0;">補間法</span><span id="t99" style="left:1097px;top:591px;font-size:14px;color:#6a6a6a;transform:scaleX(0.690);transform-origin:0 0;">分割数</span><span id="t100" style="left:1097px;top:619px;font-size:14px;color:#bdbdbd;transform:scaleX(0.839);transform-origin:0 0;">分割角度</span><span id="t101" style="left:1206px;top:515px;font-size:14px;color:#d0d0d0;transform:scaleX(0.810);transform-origin:0 0;">ベジエ</span><span id="t102" style="left:1206px;top:565px;font-size:14px;color:#d0d0d0;transform:scaleX(0.964);transform-origin:0 0;">最適</span><span id="t103" style="left:1240px;top:591px;font-size:14px;color:#6a6a6a;">8</span><span id="t104" style="left:1235px;top:619px;font-size:14px;color:#e8e8e8;">5 °</span><span id="t105" style="left:1215px;top:657px;font-size:14px;color:#d0d0d0;transform:scaleX(0.783);transform-origin:0 0;">オブジェクト(相対)</span><span id="t106" style="left:1357px;top:657px;font-size:14px;color:#5e5e5e;transform:scaleX(0.738);transform-origin:0 0;">サイズ</span><span id="t107" style="left:1066px;top:692px;font-size:14px;color:#8a8a8a;">X</span><span id="t108" style="left:1099.1000000000001px;top:692px;font-size:13.5px;color:#e0e0e0;">-90.0687 cm</span><span id="t109" style="left:1248.2px;top:692px;font-size:13.5px;color:#e0e0e0;">0 °</span><span id="t110" style="left:1364.1px;top:692px;font-size:13.5px;color:#e0e0e0;">0 cm</span><span id="t111" style="left:1066px;top:719px;font-size:14px;color:#8a8a8a;">Y</span><span id="t112" style="left:1102.7px;top:719px;font-size:13.5px;color:#e0e0e0;">31.0995 cm</span><span id="t113" style="left:1248.2px;top:719px;font-size:13.5px;color:#e0e0e0;">0 °</span><span id="t114" style="left:1338.9px;top:719px;font-size:13.5px;color:#e0e0e0;">144.4692 cm</span><span id="t115" style="left:1066px;top:747px;font-size:14px;color:#8a8a8a;">Z</span><span id="t116" style="left:1124.3px;top:747px;font-size:13.5px;color:#e0e0e0;">0 cm</span><span id="t117" style="left:1248.2px;top:747px;font-size:13.5px;color:#e0e0e0;">0 °</span><span id="t118" style="left:1364.1px;top:747px;font-size:13.5px;color:#e0e0e0;">0 cm</span>
</body></html>
